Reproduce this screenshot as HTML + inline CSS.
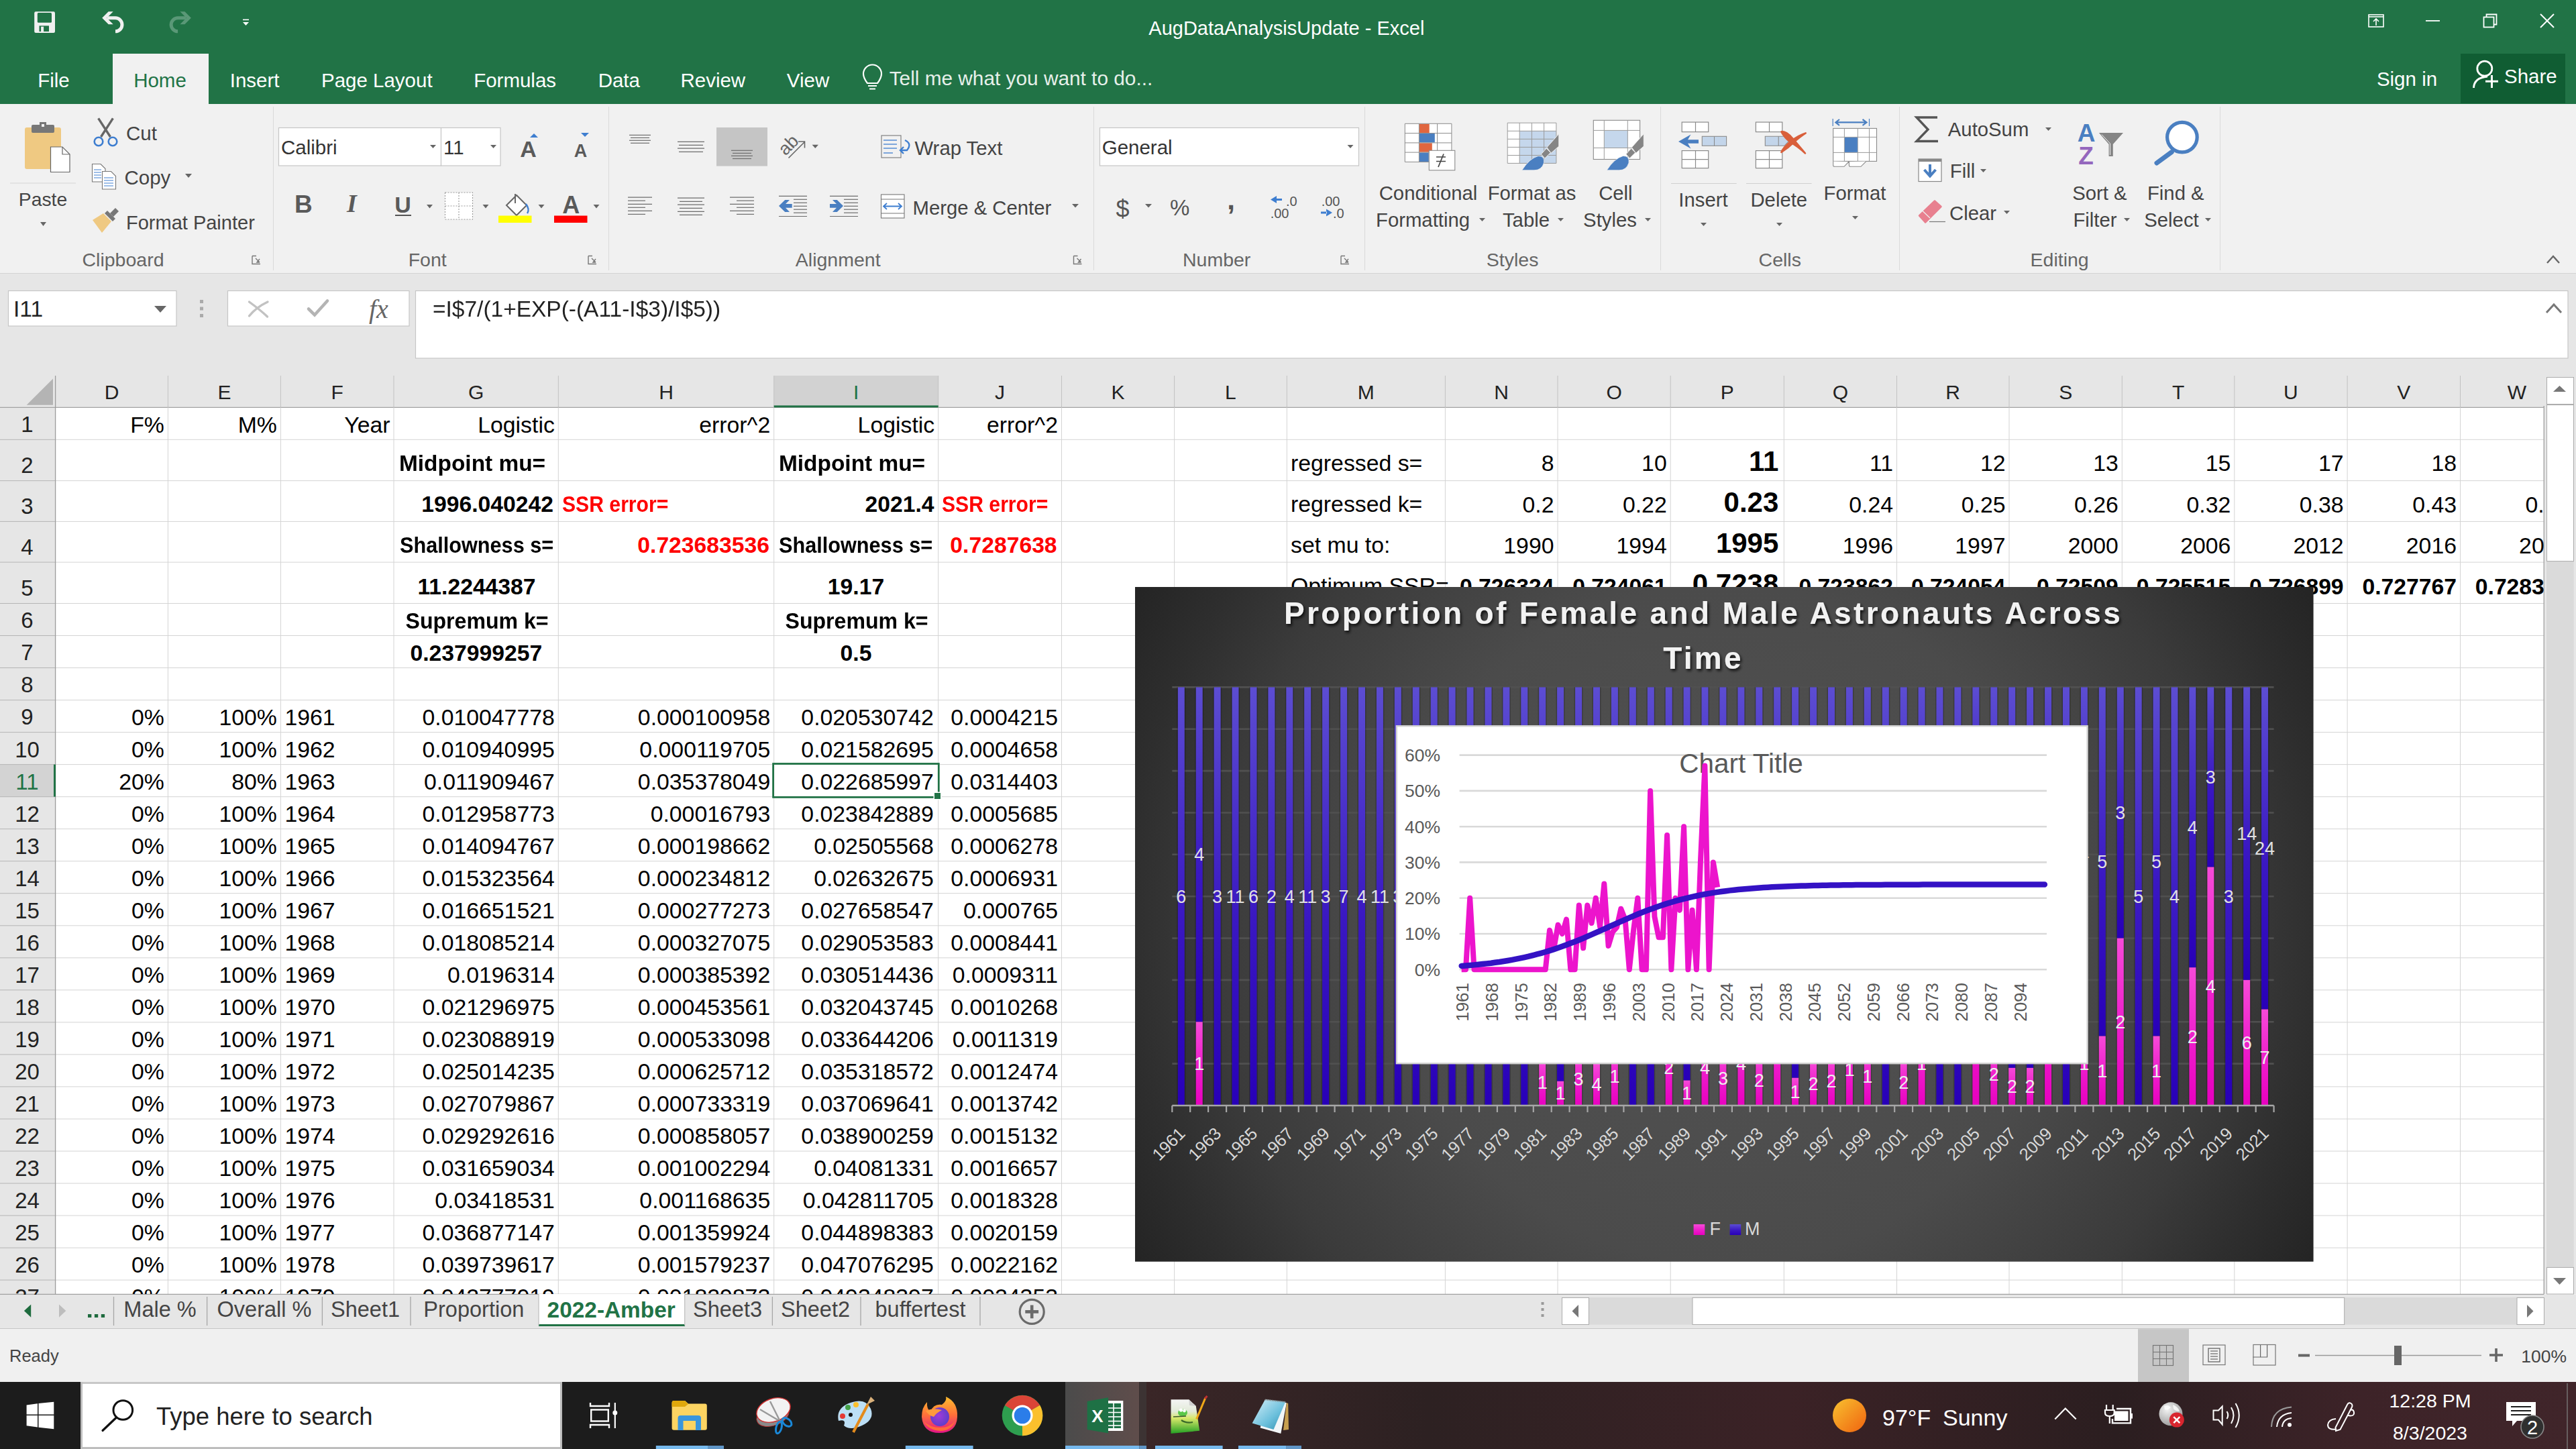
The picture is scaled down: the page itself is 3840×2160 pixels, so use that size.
<!DOCTYPE html>
<html><head><meta charset="utf-8"><title>Excel</title>
<style>
html,body{margin:0;padding:0;}
body{width:3840px;height:2160px;position:relative;overflow:hidden;background:#f1f1f1;font-family:"Liberation Sans", sans-serif;}
.t{position:absolute;white-space:nowrap;}
.r{position:absolute;}
svg{overflow:visible;}
svg text{font-family:"Liberation Sans", sans-serif;}
</style></head><body>
<div class="r" style="left:0.0px;top:0.0px;width:3840.0px;height:155.0px;background:#217346;"></div>
<div class="r" style="left:168.0px;top:80.0px;width:143.0px;height:75.0px;background:#f1f1f1;"></div>
<div class="r" style="left:3668.0px;top:80.0px;width:156.0px;height:74.0px;background:#105d33;"></div>
<svg style="position:absolute;left:0.0px;top:0.0px;" width="3840.0" height="155.0" viewBox="0 0 3840.0 155.0"><rect x="51.2" y="17.3" width="30.8" height="31.7" rx="2.2" fill="#f0f0f0"/><rect x="55.8" y="19" width="21.2" height="14.8" rx="1.5" fill="#217346"/><rect x="58.5" y="38.4" width="14.5" height="8.6" fill="#217346"/><rect x="61.1" y="39.7" width="4" height="7.3" fill="#f0f0f0"/><path d="M160 26.8 L172 26.8 A10 10 0 0 1 172 46.8" stroke="#f0f0f0" stroke-width="5" fill="none"/><path d="M152.2 26.8 L161.7 17.3 L168.7 17.3 L159.3 26.8 L168.7 36.2 L161.7 36.2 Z" fill="#f0f0f0"/><g transform="translate(437.1 0) scale(-1 1)"><path d="M160 26.8 L172 26.8 A10 10 0 0 1 172 46.8" stroke="#5a9877" stroke-width="5" fill="none"/><path d="M152.2 26.8 L161.7 17.3 L168.7 17.3 L159.3 26.8 L168.7 36.2 L161.7 36.2 Z" fill="#5a9877"/></g><rect x="362" y="28.6" width="9" height="1.6" fill="#fff"/><path d="M362 33.1 L371 33.1 L366.5 38 Z" fill="#fff"/><rect x="3531" y="22" width="22" height="18" fill="none" stroke="#fff" stroke-width="1.6"/><line x1="3531" y1="25" x2="3553" y2="25" stroke="#fff" stroke-width="1.6"/><path d="M3542 38 L3542 29 M3538 32 L3542 28 L3546 32" stroke="#fff" stroke-width="1.6" fill="none"/><line x1="3616" y1="31" x2="3637" y2="31" stroke="#fff" stroke-width="1.8"/><rect x="3702.5" y="25.5" width="15" height="15" fill="none" stroke="#fff" stroke-width="1.8"/><path d="M3706.5 25.5 L3706.5 21.5 L3721.5 21.5 L3721.5 36.5 L3717.5 36.5" fill="none" stroke="#fff" stroke-width="1.8"/><path d="M3787 21 L3807 41 M3807 21 L3787 41" stroke="#fff" stroke-width="2"/><path d="M1293 124 Q1287 116 1287 110 A13.5 13.5 0 0 1 1314 110 Q1314 116 1308 124 Z" fill="none" stroke="#fff" stroke-width="2.2"/><line x1="1294" y1="128" x2="1307" y2="128" stroke="#fff" stroke-width="2"/><line x1="1296" y1="132.5" x2="1305" y2="132.5" stroke="#fff" stroke-width="2"/><circle cx="3703.8" cy="102.2" r="11" fill="none" stroke="#fff" stroke-width="2.8"/><path d="M3687.5 131 Q3688 116 3708 114" fill="none" stroke="#fff" stroke-width="2.8"/><path d="M3714.5 112 L3714.5 131 M3705 121.2 L3724 121.2" stroke="#fff" stroke-width="3"/></svg>
<div class="t" style="top:26.0px;font-size:29.00px;line-height:32.39px;color:#fff;left:1712.3px;">AugDataAnalysisUpdate - Excel</div>
<div class="t" style="top:103.5px;font-size:29.50px;line-height:32.95px;color:#fff;left:-920.0px;width:2000px;text-align:center;">File</div>
<div class="t" style="top:103.5px;font-size:29.50px;line-height:32.95px;color:#217346;left:-761.5px;width:2000px;text-align:center;">Home</div>
<div class="t" style="top:103.5px;font-size:29.50px;line-height:32.95px;color:#fff;left:-620.4px;width:2000px;text-align:center;">Insert</div>
<div class="t" style="top:103.5px;font-size:29.50px;line-height:32.95px;color:#fff;left:-438.2px;width:2000px;text-align:center;">Page Layout</div>
<div class="t" style="top:103.5px;font-size:29.50px;line-height:32.95px;color:#fff;left:-232.4px;width:2000px;text-align:center;">Formulas</div>
<div class="t" style="top:103.5px;font-size:29.50px;line-height:32.95px;color:#fff;left:-77.2px;width:2000px;text-align:center;">Data</div>
<div class="t" style="top:103.5px;font-size:29.50px;line-height:32.95px;color:#fff;left:62.8px;width:2000px;text-align:center;">Review</div>
<div class="t" style="top:103.5px;font-size:29.50px;line-height:32.95px;color:#fff;left:204.5px;width:2000px;text-align:center;">View</div>
<div class="t" style="top:99.7px;font-size:29.80px;line-height:33.29px;color:#e6f0ea;left:1325.7px;">Tell me what you want to do...</div>
<div class="t" style="top:101.5px;font-size:29.50px;line-height:32.95px;color:#fff;left:3542.9px;">Sign in</div>
<div class="t" style="top:98.0px;font-size:29.50px;line-height:32.95px;color:#fff;left:3733.0px;">Share</div>
<div class="r" style="left:0.0px;top:155.0px;width:3840.0px;height:251.0px;background:#f1f1f1;"></div>
<div class="r" style="left:0.0px;top:407.0px;width:3840.0px;height:1.0px;background:#d4d4d4;"></div>
<div class="r" style="left:406.5px;top:159.0px;width:1.2px;height:244.0px;background:#dadada;"></div>
<div class="r" style="left:907.3px;top:159.0px;width:1.2px;height:244.0px;background:#dadada;"></div>
<div class="r" style="left:1630.3px;top:159.0px;width:1.2px;height:244.0px;background:#dadada;"></div>
<div class="r" style="left:2034.3px;top:159.0px;width:1.2px;height:244.0px;background:#dadada;"></div>
<div class="r" style="left:2475.0px;top:159.0px;width:1.2px;height:244.0px;background:#dadada;"></div>
<div class="r" style="left:2830.8px;top:159.0px;width:1.2px;height:244.0px;background:#dadada;"></div>
<div class="r" style="left:3309.3px;top:159.0px;width:1.2px;height:244.0px;background:#dadada;"></div>
<div class="t" style="top:371.7px;font-size:28.50px;line-height:31.83px;color:#666666;left:-816.5px;width:2000px;text-align:center;">Clipboard</div>
<div class="t" style="top:371.7px;font-size:28.50px;line-height:31.83px;color:#666666;left:-362.8px;width:2000px;text-align:center;">Font</div>
<div class="t" style="top:371.7px;font-size:28.50px;line-height:31.83px;color:#666666;left:249.2px;width:2000px;text-align:center;">Alignment</div>
<div class="t" style="top:371.7px;font-size:28.50px;line-height:31.83px;color:#666666;left:813.7px;width:2000px;text-align:center;">Number</div>
<div class="t" style="top:371.7px;font-size:28.50px;line-height:31.83px;color:#666666;left:1254.6px;width:2000px;text-align:center;">Styles</div>
<div class="t" style="top:371.7px;font-size:28.50px;line-height:31.83px;color:#666666;left:1653.3px;width:2000px;text-align:center;">Cells</div>
<div class="t" style="top:371.7px;font-size:28.50px;line-height:31.83px;color:#666666;left:2070.1px;width:2000px;text-align:center;">Editing</div>
<svg style="position:absolute;left:0.0px;top:0.0px;" width="3840.0" height="410.0" viewBox="0 0 3840.0 410.0"><path d="M376.0 381.5 L382.0 381.5 M376.0 381.5 L376.0 393.5 L388.0 393.5" stroke="#777" stroke-width="1.4" fill="none"/><path d="M381.0 385 L387.0 391 M387.0 391 L383.0 391 L387.0 386" stroke="#777" stroke-width="1.4" fill="none"/><path d="M877.0 381.5 L883.0 381.5 M877.0 381.5 L877.0 393.5 L889.0 393.5" stroke="#777" stroke-width="1.4" fill="none"/><path d="M882.0 385 L888.0 391 M888.0 391 L884.0 391 L888.0 386" stroke="#777" stroke-width="1.4" fill="none"/><path d="M1600.5 381.5 L1606.5 381.5 M1600.5 381.5 L1600.5 393.5 L1612.5 393.5" stroke="#777" stroke-width="1.4" fill="none"/><path d="M1605.5 385 L1611.5 391 M1611.5 391 L1607.5 391 L1611.5 386" stroke="#777" stroke-width="1.4" fill="none"/><path d="M1999.0 381.5 L2005.0 381.5 M1999.0 381.5 L1999.0 393.5 L2011.0 393.5" stroke="#777" stroke-width="1.4" fill="none"/><path d="M2004.0 385 L2010.0 391 M2010.0 391 L2006.0 391 L2010.0 386" stroke="#777" stroke-width="1.4" fill="none"/><rect x="37" y="190" width="54" height="62" rx="3" fill="#efc982"/><rect x="47" y="186" width="34" height="12" rx="2" fill="#777"/><rect x="59" y="182" width="10" height="8" fill="#777"/><rect x="62" y="185" width="4" height="4" fill="#f1f1f1"/><path d="M75.5 219 L93 219 L104 230 L104 256.5 L75.5 256.5 Z" fill="#fff" stroke="#666" stroke-width="1.2"/><path d="M93 219 L93 230 L104 230" fill="none" stroke="#666" stroke-width="1.2"/><line x1="15" y1="273" x2="113" y2="273" stroke="#d6d6d6" stroke-width="1.2"/><path d="M60 331 L69 331 L64.5 337 Z" fill="#666"/><path d="M146.6 176.4 L164.5 204 M168.4 176.4 L150.5 204" stroke="#666" stroke-width="3.4"/><circle cx="147" cy="211" r="6.3" fill="none" stroke="#3e7ed0" stroke-width="2.6"/><circle cx="168" cy="211" r="6.3" fill="none" stroke="#3e7ed0" stroke-width="2.6"/><path d="M137.5 244.5 L150 244.5 L157 251.5 L157 271 L137.5 271 Z" fill="#fff" stroke="#777" stroke-width="1.1"/><path d="M152.5 255.5 L165.5 255.5 L172.5 262.5 L172.5 282 L152.5 282 Z" fill="#fff" stroke="#777" stroke-width="1.1"/><line x1="140" y1="253" x2="151" y2="253" stroke="#3e7ed0" stroke-width="1"/><line x1="140" y1="257" x2="151" y2="257" stroke="#3e7ed0" stroke-width="1"/><line x1="140" y1="261" x2="151" y2="261" stroke="#3e7ed0" stroke-width="1"/><line x1="140" y1="265" x2="151" y2="265" stroke="#3e7ed0" stroke-width="1"/><line x1="155" y1="265" x2="169" y2="265" stroke="#3e7ed0" stroke-width="1"/><line x1="155" y1="269" x2="169" y2="269" stroke="#3e7ed0" stroke-width="1"/><line x1="155" y1="273" x2="169" y2="273" stroke="#3e7ed0" stroke-width="1"/><line x1="155" y1="277" x2="169" y2="277" stroke="#3e7ed0" stroke-width="1"/><path d="M276 259 L286 259 L281 265 Z" fill="#666"/><path d="M138 328 L154 318 L166 330 L152 347 Z" fill="#efc982"/><path d="M156 318 L168 330 L172 326 L160 314 Z" fill="#777"/><path d="M164 318 L172 310 L177 315 L169 323 Z" fill="#777"/><rect x="415.5" y="190.5" width="242" height="56.5" fill="#fff" stroke="#c6c6c6" stroke-width="1.2"/><rect x="657.5" y="190.5" width="88.5" height="56.5" fill="#fff" stroke="#c6c6c6" stroke-width="1.2"/><path d="M641 216 L650 216 L645.5 221 Z" fill="#666"/><path d="M731 216 L740 216 L735.5 221 Z" fill="#666"/><path d="M790 205 L802 205 L796 199 Z" fill="#3e7ed0"/><path d="M866 198 L878 198 L872 204 Z" fill="#3e7ed0"/><rect x="718.5" y="222" width="0" height="0"/><rect x="663.5" y="287" width="41" height="40" fill="#fff" stroke="#999" stroke-width="1.1" stroke-dasharray="2,2"/><line x1="684" y1="287" x2="684" y2="327" stroke="#999" stroke-width="1.1" stroke-dasharray="2,2"/><line x1="663.5" y1="307" x2="704.5" y2="307" stroke="#999" stroke-width="1.1" stroke-dasharray="2,2"/><path d="M636.0 305 L645.0 305 L640.5 310.5 Z" fill="#666"/><path d="M719.5 305 L728.5 305 L724.0 310.5 Z" fill="#666"/><path d="M802.5 305 L811.5 305 L807.0 310.5 Z" fill="#666"/><path d="M884.5 305 L893.5 305 L889.0 310.5 Z" fill="#666"/><path d="M755 306 L770 291 L785 306 L770 321 Z" fill="#fff" stroke="#666" stroke-width="2"/><path d="M768 289 L768 303" stroke="#666" stroke-width="2"/><path d="M784 304 Q790 312 786 318" stroke="#3e7ed0" stroke-width="2.4" fill="none"/><rect x="743" y="321.5" width="49.5" height="10.5" fill="#ffff00"/><rect x="826" y="321.5" width="49.5" height="10.5" fill="#ff0000"/><line x1="938.0" y1="201.4" x2="970.0" y2="201.4" stroke="#6d6d6d" stroke-width="1.2"/><line x1="940.0" y1="205.4" x2="968.0" y2="205.4" stroke="#6d6d6d" stroke-width="1.2"/><line x1="938.0" y1="209.3" x2="970.0" y2="209.3" stroke="#6d6d6d" stroke-width="1.2"/><line x1="940.0" y1="213.3" x2="968.0" y2="213.3" stroke="#6d6d6d" stroke-width="1.2"/><line x1="1010.0" y1="211.3" x2="1050.0" y2="211.3" stroke="#6d6d6d" stroke-width="1.2"/><line x1="1012.0" y1="216.3" x2="1048.0" y2="216.3" stroke="#6d6d6d" stroke-width="1.2"/><line x1="1010.0" y1="221.2" x2="1050.0" y2="221.2" stroke="#6d6d6d" stroke-width="1.2"/><line x1="1012.0" y1="226.4" x2="1048.0" y2="226.4" stroke="#6d6d6d" stroke-width="1.2"/><rect x="1068" y="190" width="76" height="57.6" fill="#c5c5c5"/><line x1="1090.0" y1="224.3" x2="1122.0" y2="224.3" stroke="#6d6d6d" stroke-width="1.2"/><line x1="1092.0" y1="228.4" x2="1120.0" y2="228.4" stroke="#6d6d6d" stroke-width="1.2"/><line x1="1090.0" y1="232.4" x2="1122.0" y2="232.4" stroke="#6d6d6d" stroke-width="1.2"/><line x1="1092.0" y1="236.5" x2="1120.0" y2="236.5" stroke="#6d6d6d" stroke-width="1.2"/><text x="1171" y="233" font-size="27" fill="#666" transform="rotate(-45 1171 233)">ab</text><path d="M1175.5 235.5 L1199.5 211.5 M1190 211 L1199.5 211 L1199.5 220.5" stroke="#666" stroke-width="1.6" fill="none"/><path d="M1210.6 215.8 L1220 215.8 L1215.3 221 Z" fill="#666"/><line x1="936.0" y1="294.2" x2="972.0" y2="294.2" stroke="#6d6d6d" stroke-width="1.2"/><line x1="936.0" y1="299.2" x2="962.0" y2="299.2" stroke="#6d6d6d" stroke-width="1.2"/><line x1="936.0" y1="304.3" x2="972.0" y2="304.3" stroke="#6d6d6d" stroke-width="1.2"/><line x1="936.0" y1="309.3" x2="962.0" y2="309.3" stroke="#6d6d6d" stroke-width="1.2"/><line x1="936.0" y1="314.4" x2="972.0" y2="314.4" stroke="#6d6d6d" stroke-width="1.2"/><line x1="936.0" y1="319.4" x2="962.0" y2="319.4" stroke="#6d6d6d" stroke-width="1.2"/><line x1="1010.0" y1="295.2" x2="1050.0" y2="295.2" stroke="#6d6d6d" stroke-width="1.2"/><line x1="1013.0" y1="300.3" x2="1047.0" y2="300.3" stroke="#6d6d6d" stroke-width="1.2"/><line x1="1010.0" y1="305.2" x2="1050.0" y2="305.2" stroke="#6d6d6d" stroke-width="1.2"/><line x1="1013.0" y1="310.4" x2="1047.0" y2="310.4" stroke="#6d6d6d" stroke-width="1.2"/><line x1="1010.0" y1="315.3" x2="1050.0" y2="315.3" stroke="#6d6d6d" stroke-width="1.2"/><line x1="1013.0" y1="320.3" x2="1047.0" y2="320.3" stroke="#6d6d6d" stroke-width="1.2"/><line x1="1088.0" y1="294.2" x2="1124.0" y2="294.2" stroke="#6d6d6d" stroke-width="1.2"/><line x1="1098.0" y1="299.2" x2="1124.0" y2="299.2" stroke="#6d6d6d" stroke-width="1.2"/><line x1="1088.0" y1="304.3" x2="1124.0" y2="304.3" stroke="#6d6d6d" stroke-width="1.2"/><line x1="1098.0" y1="309.3" x2="1124.0" y2="309.3" stroke="#6d6d6d" stroke-width="1.2"/><line x1="1088.0" y1="314.4" x2="1124.0" y2="314.4" stroke="#6d6d6d" stroke-width="1.2"/><line x1="1098.0" y1="319.4" x2="1124.0" y2="319.4" stroke="#6d6d6d" stroke-width="1.2"/><line x1="1161.0" y1="292.4" x2="1203.0" y2="292.4" stroke="#6d6d6d" stroke-width="1.2"/><line x1="1183.0" y1="297.3" x2="1203.0" y2="297.3" stroke="#6d6d6d" stroke-width="1.2"/><line x1="1183.0" y1="302.3" x2="1203.0" y2="302.3" stroke="#6d6d6d" stroke-width="1.2"/><line x1="1183.0" y1="307.3" x2="1203.0" y2="307.3" stroke="#6d6d6d" stroke-width="1.2"/><line x1="1183.0" y1="312.2" x2="1203.0" y2="312.2" stroke="#6d6d6d" stroke-width="1.2"/><line x1="1183.0" y1="317.2" x2="1203.0" y2="317.2" stroke="#6d6d6d" stroke-width="1.2"/><line x1="1161.0" y1="322.5" x2="1203.0" y2="322.5" stroke="#6d6d6d" stroke-width="1.2"/><path d="M1161 307 L1170.2 298 L1177 298 L1171 303.9 L1180.7 303.9 L1180.7 309.8 L1171 309.8 L1177 316 L1170.2 316 Z" fill="#4a7fc1"/><line x1="1237.0" y1="292.4" x2="1279.0" y2="292.4" stroke="#6d6d6d" stroke-width="1.2"/><line x1="1258.0" y1="297.3" x2="1279.0" y2="297.3" stroke="#6d6d6d" stroke-width="1.2"/><line x1="1258.0" y1="302.3" x2="1279.0" y2="302.3" stroke="#6d6d6d" stroke-width="1.2"/><line x1="1258.0" y1="307.3" x2="1279.0" y2="307.3" stroke="#6d6d6d" stroke-width="1.2"/><line x1="1258.0" y1="312.2" x2="1279.0" y2="312.2" stroke="#6d6d6d" stroke-width="1.2"/><line x1="1258.0" y1="317.2" x2="1279.0" y2="317.2" stroke="#6d6d6d" stroke-width="1.2"/><line x1="1237.0" y1="322.5" x2="1279.0" y2="322.5" stroke="#6d6d6d" stroke-width="1.2"/><path d="M1257 307 L1247.8 298 L1241 298 L1247 303.9 L1237 303.9 L1237 309.8 L1247 309.8 L1241 316 L1247.8 316 Z" fill="#4a7fc1"/><rect x="1314" y="202" width="29" height="33" fill="none" stroke="#777" stroke-width="1.1"/><line x1="1317.0" y1="209.0" x2="1337.0" y2="209.0" stroke="#3e7ed0" stroke-width="1.3"/><line x1="1317.0" y1="215.0" x2="1337.0" y2="215.0" stroke="#3e7ed0" stroke-width="1.3"/><line x1="1317.0" y1="221.0" x2="1337.0" y2="221.0" stroke="#3e7ed0" stroke-width="1.3"/><line x1="1317.0" y1="228.0" x2="1331.0" y2="228.0" stroke="#3e7ed0" stroke-width="1.3"/><path d="M1349 209 Q1360 214 1352 224 L1343 224 M1347 219 L1342 224 L1347 229" stroke="#3e7ed0" stroke-width="2.4" fill="none"/><rect x="1313.5" y="290" width="34.5" height="35" fill="#fff" stroke="#777" stroke-width="1.1"/><line x1="1313.5" y1="297" x2="1348" y2="297" stroke="#777" stroke-width="1"/><line x1="1313.5" y1="318" x2="1348" y2="318" stroke="#777" stroke-width="1"/><path d="M1318 307.5 L1343 307.5 M1322 303 L1317 307.5 L1322 312 M1339 303 L1344 307.5 L1339 312" stroke="#3e7ed0" stroke-width="1.8" fill="none"/><path d="M1598 304 L1608 304 L1603 309.5 Z" fill="#666"/><rect x="1639.5" y="190.5" width="386" height="56.5" fill="#fff" stroke="#c6c6c6" stroke-width="1.2"/><path d="M2008.5 216 L2017.5 216 L2013 221 Z" fill="#666"/><path d="M1707 304 L1717 304 L1712 309.5 Z" fill="#666"/></svg>
<div class="t" style="top:182.8px;font-size:29.50px;line-height:32.95px;color:#444444;left:188.0px;">Cut</div>
<div class="t" style="top:248.8px;font-size:29.50px;line-height:32.95px;color:#444444;left:185.5px;">Copy</div>
<div class="t" style="top:315.8px;font-size:29.00px;line-height:32.39px;color:#444444;left:188.0px;">Format Painter</div>
<div class="t" style="top:282.4px;font-size:28.30px;line-height:31.61px;color:#444444;left:-936.0px;width:2000px;text-align:center;">Paste</div>
<div class="t" style="top:204.3px;font-size:29.50px;line-height:32.95px;color:#333;left:419.0px;">Calibri</div>
<div class="t" style="top:204.3px;font-size:29.50px;line-height:32.95px;color:#333;left:661.0px;">11</div>
<div class="t" style="top:203.2px;font-size:34.00px;line-height:37.98px;color:#5a5a5a;font-weight:bold;left:-212.5px;width:2000px;text-align:center;">A</div>
<div class="t" style="top:209.6px;font-size:27.00px;line-height:30.16px;color:#5a5a5a;font-weight:bold;left:-134.5px;width:2000px;text-align:center;">A</div>
<div class="t" style="top:283.5px;font-size:37.00px;line-height:41.33px;color:#5a5a5a;font-weight:bold;left:-547.7px;width:2000px;text-align:center;">B</div>
<div class="t" style="left:517px;top:283px;font-size:38px;line-height:40px;color:#5a5a5a;font-weight:bold;font-family:'Liberation Serif',serif;font-style:italic;">I</div>
<div class="t" style="top:286.2px;font-size:34.00px;line-height:37.98px;color:#5a5a5a;font-weight:bold;left:-399.5px;width:2000px;text-align:center;">U</div>
<div class="r" style="left:589.0px;top:319.5px;width:23.5px;height:2.0px;background:#555;"></div>
<div class="t" style="top:286.4px;font-size:36.00px;line-height:40.21px;color:#5a5a5a;font-weight:bold;left:-148.8px;width:2000px;text-align:center;">A</div>
<div class="t" style="top:204.5px;font-size:29.30px;line-height:32.73px;color:#444444;left:1363.5px;">Wrap Text</div>
<div class="t" style="top:294.0px;font-size:29.30px;line-height:32.73px;color:#444444;left:1360.5px;">Merge &amp; Center</div>
<div class="t" style="top:204.3px;font-size:29.50px;line-height:32.95px;color:#333;left:1642.7px;">General</div>
<div class="t" style="top:292.4px;font-size:36.00px;line-height:40.21px;color:#555;left:673.5px;width:2000px;text-align:center;">$</div>
<div class="t" style="top:292.1px;font-size:33.00px;line-height:36.86px;color:#555;left:758.7px;width:2000px;text-align:center;">%</div>
<div class="t" style="top:275.0px;font-size:42.00px;line-height:46.91px;color:#555;font-weight:bold;left:835.0px;width:2000px;text-align:center;">,</div>
<div class="t" style="top:288.9px;font-size:20.00px;line-height:22.34px;color:#555;left:1911.0px;margin-left:6px;">.0</div>
<div class="t" style="top:307.4px;font-size:20.00px;line-height:22.34px;color:#555;left:1893.7px;">.00</div>
<div class="t" style="top:288.9px;font-size:20.00px;line-height:22.34px;color:#555;left:1969.7px;">.00</div>
<div class="t" style="top:307.4px;font-size:20.00px;line-height:22.34px;color:#555;left:1987.0px;">.0</div>
<svg style="position:absolute;left:0.0px;top:0.0px;" width="3840.0" height="410.0" viewBox="0 0 3840.0 410.0"><path d="M1894 297.5 L1903 292 L1903 303 Z M1902 296 L1911 296 L1911 299 L1902 299 Z" fill="#3e7ed0"/><path d="M1986 317 L1977 311.5 L1977 322.5 Z M1969 315.5 L1978 315.5 L1978 318.5 L1969 318.5 Z" fill="#3e7ed0"/></svg>
<div class="t" style="top:271.6px;font-size:29.30px;line-height:32.73px;color:#444444;left:1129.0px;width:2000px;text-align:center;">Conditional</div>
<div class="t" style="top:311.5px;font-size:29.30px;line-height:32.73px;color:#444444;left:1121.0px;width:2000px;text-align:center;">Formatting</div>
<div class="t" style="top:271.6px;font-size:29.30px;line-height:32.73px;color:#444444;left:1283.6px;width:2000px;text-align:center;">Format as</div>
<div class="t" style="top:311.5px;font-size:29.30px;line-height:32.73px;color:#444444;left:1275.0px;width:2000px;text-align:center;">Table</div>
<div class="t" style="top:271.6px;font-size:29.30px;line-height:32.73px;color:#444444;left:1408.4px;width:2000px;text-align:center;">Cell</div>
<div class="t" style="top:311.5px;font-size:29.30px;line-height:32.73px;color:#444444;left:1400.0px;width:2000px;text-align:center;">Styles</div>
<div class="t" style="top:281.5px;font-size:29.30px;line-height:32.73px;color:#444444;left:1539.0px;width:2000px;text-align:center;">Insert</div>
<div class="t" style="top:281.5px;font-size:29.30px;line-height:32.73px;color:#444444;left:1651.8px;width:2000px;text-align:center;">Delete</div>
<div class="t" style="top:271.5px;font-size:29.30px;line-height:32.73px;color:#444444;left:1765.0px;width:2000px;text-align:center;">Format</div>
<div class="t" style="top:177.2px;font-size:29.30px;line-height:32.73px;color:#444444;left:2903.8px;">AutoSum</div>
<div class="t" style="top:239.3px;font-size:29.30px;line-height:32.73px;color:#444444;left:2906.8px;">Fill</div>
<div class="t" style="top:301.5px;font-size:29.30px;line-height:32.73px;color:#444444;left:2906.0px;">Clear</div>
<div class="t" style="top:271.5px;font-size:29.30px;line-height:32.73px;color:#444444;left:2129.9px;width:2000px;text-align:center;">Sort &amp;</div>
<div class="t" style="top:311.5px;font-size:29.30px;line-height:32.73px;color:#444444;left:2123.0px;width:2000px;text-align:center;">Filter</div>
<div class="t" style="top:271.5px;font-size:29.30px;line-height:32.73px;color:#444444;left:2243.3px;width:2000px;text-align:center;">Find &amp;</div>
<div class="t" style="top:311.5px;font-size:29.30px;line-height:32.73px;color:#444444;left:2237.0px;width:2000px;text-align:center;">Select</div>
<svg style="position:absolute;left:0.0px;top:0.0px;" width="3840.0" height="410.0" viewBox="0 0 3840.0 410.0"><path d="M2205.0 325.0 L2214.0 325.0 L2209.5 330.0 Z" fill="#666"/><path d="M2322.0 325.0 L2331.0 325.0 L2326.5 330.0 Z" fill="#666"/><path d="M2452.0 325.0 L2461.0 325.0 L2456.5 330.0 Z" fill="#666"/><path d="M2535.0 332.0 L2544.0 332.0 L2539.5 337.0 Z" fill="#666"/><path d="M2648.0 332.0 L2657.0 332.0 L2652.5 337.0 Z" fill="#666"/><path d="M2761.0 322.0 L2770.0 322.0 L2765.5 327.0 Z" fill="#666"/><path d="M3049.0 190.0 L3058.0 190.0 L3053.5 195.0 Z" fill="#666"/><path d="M2952.0 252.0 L2961.0 252.0 L2956.5 257.0 Z" fill="#666"/><path d="M2987.0 314.0 L2996.0 314.0 L2991.5 319.0 Z" fill="#666"/><path d="M3166.0 325.0 L3175.0 325.0 L3170.5 330.0 Z" fill="#666"/><path d="M3287.0 325.0 L3296.0 325.0 L3291.5 330.0 Z" fill="#666"/><rect x="2094.3" y="184.3" width="69.6" height="57.1" fill="#fff"/><rect x="2115.8" y="184.8" width="14.9" height="13.4" fill="#e0663f"/><rect x="2115.8" y="199" width="23" height="13.4" fill="#4a7fc1"/><rect x="2115.8" y="213.3" width="19" height="13.4" fill="#e0663f"/><rect x="2115.8" y="227.5" width="14" height="13.5" fill="#4a7fc1"/><line x1="2094.3" y1="184.3" x2="2094.3" y2="241.4" stroke="#8a8a8a" stroke-width="1"/><line x1="2115.4" y1="184.3" x2="2115.4" y2="241.4" stroke="#8a8a8a" stroke-width="1"/><line x1="2142.6" y1="184.3" x2="2142.6" y2="241.4" stroke="#8a8a8a" stroke-width="1"/><line x1="2163.9" y1="184.3" x2="2163.9" y2="241.4" stroke="#8a8a8a" stroke-width="1"/><line x1="2094.3" y1="184.3" x2="2163.9" y2="184.3" stroke="#8a8a8a" stroke-width="1"/><line x1="2094.3" y1="198.6" x2="2163.9" y2="198.6" stroke="#8a8a8a" stroke-width="1"/><line x1="2094.3" y1="212.9" x2="2163.9" y2="212.9" stroke="#8a8a8a" stroke-width="1"/><line x1="2094.3" y1="227.1" x2="2163.9" y2="227.1" stroke="#8a8a8a" stroke-width="1"/><line x1="2094.3" y1="241.4" x2="2163.9" y2="241.4" stroke="#8a8a8a" stroke-width="1"/><rect x="2130.3" y="224.3" width="38.5" height="29.5" fill="#fff" stroke="#8a8a8a" stroke-width="1.1"/><path d="M2141 234 L2155 234 M2141 240.5 L2155 240.5 M2152 229.5 L2144 249" stroke="#444" stroke-width="1.7" fill="none"/><rect x="2247.2" y="183.2" width="72.7" height="60.2" fill="#fff"/><rect x="2265.2" y="195.3" width="54.7" height="48.1" fill="#c5d7ec"/><line x1="2247.2" y1="183.2" x2="2247.2" y2="243.4" stroke="#9a9a9a" stroke-width="1"/><line x1="2265.2" y1="183.2" x2="2265.2" y2="243.4" stroke="#9a9a9a" stroke-width="1"/><line x1="2283.4" y1="183.2" x2="2283.4" y2="243.4" stroke="#9a9a9a" stroke-width="1"/><line x1="2301.6" y1="183.2" x2="2301.6" y2="243.4" stroke="#9a9a9a" stroke-width="1"/><line x1="2319.9" y1="183.2" x2="2319.9" y2="243.4" stroke="#9a9a9a" stroke-width="1"/><line x1="2247.2" y1="183.2" x2="2319.9" y2="183.2" stroke="#9a9a9a" stroke-width="1"/><line x1="2247.2" y1="195.3" x2="2319.9" y2="195.3" stroke="#9a9a9a" stroke-width="1"/><line x1="2247.2" y1="207.3" x2="2319.9" y2="207.3" stroke="#9a9a9a" stroke-width="1"/><line x1="2247.2" y1="219.4" x2="2319.9" y2="219.4" stroke="#9a9a9a" stroke-width="1"/><line x1="2247.2" y1="231.5" x2="2319.9" y2="231.5" stroke="#9a9a9a" stroke-width="1"/><line x1="2247.2" y1="243.4" x2="2319.9" y2="243.4" stroke="#9a9a9a" stroke-width="1"/><path d="M2305.9 219.7 L2323.8 199.5 L2323.8 218.1 L2312.1 228.2 Z" fill="#858585" stroke="#f1f1f1" stroke-width="1"/><path d="M2297.4 229.8 L2305.2 221.2 L2311.4 227.5 L2302.8 236 Z" fill="#858585" stroke="#f1f1f1" stroke-width="1"/><path d="M2268.7 253.8 Q2280.0 236 2293.0 232.5 Q2303.0 232 2301.5 243 Q2298.0 253.8 2287.0 253.8 Z" fill="#4a7fc1" stroke="#f1f1f1" stroke-width="0.8"/><rect x="2375.3" y="179.3" width="69.3" height="58.2" fill="#fff" stroke="#8a8a8a" stroke-width="1.1"/><rect x="2391.3" y="194.4" width="35" height="26.1" fill="#c5d7ec"/><line x1="2375.3" y1="194.4" x2="2444.6" y2="194.4" stroke="#9a9a9a"/><line x1="2375.3" y1="220.5" x2="2444.6" y2="220.5" stroke="#9a9a9a"/><line x1="2391.3" y1="179.3" x2="2391.3" y2="237.5" stroke="#9a9a9a"/><line x1="2426.3" y1="179.3" x2="2426.3" y2="237.5" stroke="#9a9a9a"/><path d="M2432.4 219.7 L2450.3 199.5 L2450.3 218.1 L2438.6 228.2 Z" fill="#858585" stroke="#f1f1f1" stroke-width="1"/><path d="M2423.9 229.8 L2431.7 221.2 L2437.9 227.5 L2429.3 236 Z" fill="#858585" stroke="#f1f1f1" stroke-width="1"/><path d="M2395.2 253.8 Q2406.5 236 2419.5 232.5 Q2429.5 232 2428.0 243 Q2424.5 253.8 2413.5 253.8 Z" fill="#4a7fc1" stroke="#f1f1f1" stroke-width="0.8"/><rect x="2507.2" y="182.1" width="39.5" height="14.5" fill="#fff" stroke="#8a8a8a" stroke-width="1.2"/><line x1="2527.5" y1="182.1" x2="2527.5" y2="196.6" stroke="#8a8a8a" stroke-width="1.2"/><rect x="2507.2" y="224.6" width="39.5" height="26" fill="#fff" stroke="#8a8a8a" stroke-width="1.2"/><line x1="2527.5" y1="224.6" x2="2527.5" y2="250.6" stroke="#8a8a8a" stroke-width="1.2"/><line x1="2507.2" y1="237.6" x2="2546.7" y2="237.6" stroke="#8a8a8a" stroke-width="1.2"/><rect x="2537.3" y="203.3" width="36.3" height="14" fill="#c3d5ea" stroke="#8a8a8a" stroke-width="1.1"/><line x1="2555.5" y1="203.3" x2="2555.5" y2="217.3" stroke="#8a8a8a" stroke-width="1.1"/><path d="M2502 211 L2520.5 200.5 L2516 208.2 L2532 208.2 L2532 213.8 L2516 213.8 L2520.5 221.5 Z" fill="#4a7fc1"/><line x1="2491" y1="273.5" x2="2588.7" y2="273.5" stroke="#d0d0d0" stroke-width="1.2"/><rect x="2617.4" y="182.1" width="39.4" height="14.5" fill="#fff" stroke="#8a8a8a" stroke-width="1.2"/><line x1="2637.5" y1="182.1" x2="2637.5" y2="196.6" stroke="#8a8a8a" stroke-width="1.2"/><rect x="2617.4" y="224.6" width="39.4" height="26" fill="#fff" stroke="#8a8a8a" stroke-width="1.2"/><line x1="2637.5" y1="224.6" x2="2637.5" y2="250.6" stroke="#8a8a8a" stroke-width="1.2"/><line x1="2617.4" y1="237.6" x2="2656.8" y2="237.6" stroke="#8a8a8a" stroke-width="1.2"/><path d="M2631.3 203.3 L2660 203.3 L2666.6 210.3 L2660 217.3 L2631.3 217.3 Z" fill="#c3d5ea" stroke="#8a8a8a" stroke-width="1.1"/><line x1="2651.2" y1="203.3" x2="2651.2" y2="217.3" stroke="#8a8a8a" stroke-width="1.1"/><path d="M2655.4 196.3 Q2662 195 2672 206 Q2684 220 2691 228.5 Q2680 218 2669 212 Q2660 205 2655.4 196.3 Z" fill="#d95f3b" stroke="#d95f3b" stroke-width="2.6" stroke-linejoin="round"/><path d="M2691.7 198.4 Q2680 202 2669 211 Q2658 220 2655.4 227 Q2666 220 2673 213 Q2683 204 2691.7 198.4 Z" fill="#d95f3b" stroke="#d95f3b" stroke-width="2.6" stroke-linejoin="round"/><line x1="2603" y1="273.5" x2="2700.6" y2="273.5" stroke="#d0d0d0" stroke-width="1.2"/><rect x="2732.7" y="191.4" width="64.8" height="49" fill="#fff" stroke="#8a8a8a" stroke-width="1.1"/><line x1="2749.4" y1="191.4" x2="2749.4" y2="240.4" stroke="#9a9a9a" stroke-width="1"/><line x1="2769.3" y1="191.4" x2="2769.3" y2="240.4" stroke="#9a9a9a" stroke-width="1"/><line x1="2786.5" y1="191.4" x2="2786.5" y2="240.4" stroke="#9a9a9a" stroke-width="1"/><line x1="2732.7" y1="204.4" x2="2797.5" y2="204.4" stroke="#9a9a9a" stroke-width="1"/><line x1="2732.7" y1="227.4" x2="2797.5" y2="227.4" stroke="#9a9a9a" stroke-width="1"/><rect x="2749.9" y="204.9" width="19" height="22" fill="#4a7fc1"/><path d="M2732.7 240.4 L2732.7 246.5 Q2732.7 248.3 2735 248.3 L2749 248.3 L2756 241 M2756.4 241 L2756.4 246.5 Q2756.4 248.3 2758.5 248.3 L2774 248.3 L2782 240.4" fill="#fff" stroke="#8a8a8a" stroke-width="1.1"/><path d="M2737 182.4 L2782 182.4 M2742 178 L2736.4 182.4 L2742 187 M2776.5 178 L2782.5 182.4 L2776.5 187" stroke="#4a7fc1" stroke-width="2.2" fill="none"/><path d="M2732.2 177 L2732.2 188 M2786.5 177 L2786.5 188" stroke="#4a7fc1" stroke-width="1.2"/><path d="M2888 175 L2857 175 L2874 193 L2857 210.5 L2889 210.5" stroke="#555" stroke-width="3.4" fill="none"/><rect x="2860" y="237" width="34" height="33.5" fill="#fff" stroke="#888" stroke-width="1.2"/><rect x="2860" y="237" width="34" height="4" fill="#888"/><path d="M2877 245 L2877 261 M2868.5 253 L2877 262.5 L2885.5 253" stroke="#4a7fc1" stroke-width="4" fill="none"/><path d="M2884 299.5 L2893.5 308 L2870 331.5 L2861 321.5 Z" fill="#e8808f" stroke="#e8808f" stroke-width="2.5" stroke-linejoin="round"/><line x1="2866" y1="314.5" x2="2877" y2="325" stroke="#f1f1f1" stroke-width="1.2"/><line x1="2876" y1="330.5" x2="2900" y2="330.5" stroke="#777" stroke-width="1.2"/><text x="3110" y="211" font-size="37" font-weight="bold" fill="#4a7fc1" text-anchor="middle">A</text><text x="3109.6" y="244.5" font-size="37" font-weight="bold" fill="#9467bd" text-anchor="middle">Z</text><path d="M3128.9 198 L3165 198 L3149.8 215 L3149.8 232.9 L3143.6 232.9 L3143.6 215 Z" fill="#858585"/><path d="M3133 200.5 L3145.5 214 L3145.5 231" fill="none" stroke="#f1f1f1" stroke-width="1"/><circle cx="3252.9" cy="204.6" r="22.3" fill="#fff" stroke="#4a7fc1" stroke-width="5.2"/><line x1="3237.3" y1="226.6" x2="3215" y2="243" stroke="#4a7fc1" stroke-width="7" stroke-linecap="round"/><path d="M3797 392 L3806 382 L3815 392" stroke="#666" stroke-width="2.4" fill="none"/></svg>
<div class="r" style="left:0.0px;top:408.0px;width:3840.0px;height:152.0px;background:#e6e6e6;"></div>
<svg style="position:absolute;left:0.0px;top:0.0px;" width="3840.0" height="560.0" viewBox="0 0 3840.0 560.0"><rect x="12.5" y="433.5" width="250.5" height="52.5" fill="#fff" stroke="#c6c6c6" stroke-width="1.2"/><path d="M230 456 L248 456 L239 466 Z" fill="#666"/><rect x="298" y="447" width="5" height="5" fill="#aaa"/><rect x="298" y="457.5" width="5" height="5" fill="#aaa"/><rect x="298" y="468" width="5" height="5" fill="#aaa"/><rect x="339.5" y="433.5" width="270.5" height="52.5" fill="#fff" stroke="#c6c6c6" stroke-width="1.2"/><path d="M371.5 450 Q388 462 398.5 472 M399 450 Q382 458 371.5 471" stroke="#c2c2c2" stroke-width="3.4" stroke-linecap="round" fill="none"/><path d="M460 460.5 L469 469.5 L488 448.5" stroke="#b4b4b4" stroke-width="4.6" stroke-linecap="round" fill="none"/><rect x="619.5" y="433.5" width="3208.5" height="100.5" fill="#fff" stroke="#c6c6c6" stroke-width="1.2"/><path d="M3796 466 L3807 454 L3818 466" stroke="#777" stroke-width="3" fill="none"/></svg>
<div class="t" style="left:550px;top:438px;font-size:40px;line-height:46px;color:#666;font-family:'Liberation Serif',serif;font-style:italic;">fx</div>
<div class="t" style="top:441.7px;font-size:33.50px;line-height:37.42px;color:#222;left:20.0px;">I11</div>
<div class="t" style="top:442.6px;font-size:32.50px;line-height:36.30px;color:#222;left:645.0px;transform:scaleX(1.030);transform-origin:0 0;">=I$7/(1+EXP(-(A11-I$3)/I$5))</div>
<div class="r" style="left:0.0px;top:560.0px;width:3840.0px;height:1369.3px;background:#e6e6e6;"></div>
<div class="r" style="left:83.0px;top:607.3px;width:3709.2px;height:1322.0px;background:#ffffff;"></div>
<div class="r" style="left:1153.7px;top:560.0px;width:245.0px;height:47.3px;background:#d2d2d2;"></div>
<div class="r" style="left:0.0px;top:1139.6px;width:82.5px;height:48.0px;background:#d3d3d3;"></div>
<svg style="position:absolute;left:0.0px;top:0.0px;" width="3840.0" height="2160.0" viewBox="0 0 3840.0 2160.0"><line x1="250.4" y1="560.0" x2="250.4" y2="607.3" stroke="#c2c2c2" stroke-width="1"/><line x1="418.4" y1="560.0" x2="418.4" y2="607.3" stroke="#c2c2c2" stroke-width="1"/><line x1="587.0" y1="560.0" x2="587.0" y2="607.3" stroke="#c2c2c2" stroke-width="1"/><line x1="832.3" y1="560.0" x2="832.3" y2="607.3" stroke="#c2c2c2" stroke-width="1"/><line x1="1153.7" y1="560.0" x2="1153.7" y2="607.3" stroke="#c2c2c2" stroke-width="1"/><line x1="1398.7" y1="560.0" x2="1398.7" y2="607.3" stroke="#c2c2c2" stroke-width="1"/><line x1="1582.5" y1="560.0" x2="1582.5" y2="607.3" stroke="#c2c2c2" stroke-width="1"/><line x1="1750.6" y1="560.0" x2="1750.6" y2="607.3" stroke="#c2c2c2" stroke-width="1"/><line x1="1918.3" y1="560.0" x2="1918.3" y2="607.3" stroke="#c2c2c2" stroke-width="1"/><line x1="2154.4" y1="560.0" x2="2154.4" y2="607.3" stroke="#c2c2c2" stroke-width="1"/><line x1="2322.0" y1="560.0" x2="2322.0" y2="607.3" stroke="#c2c2c2" stroke-width="1"/><line x1="2490.2" y1="560.0" x2="2490.2" y2="607.3" stroke="#c2c2c2" stroke-width="1"/><line x1="2659.3" y1="560.0" x2="2659.3" y2="607.3" stroke="#c2c2c2" stroke-width="1"/><line x1="2827.5" y1="560.0" x2="2827.5" y2="607.3" stroke="#c2c2c2" stroke-width="1"/><line x1="2995.0" y1="560.0" x2="2995.0" y2="607.3" stroke="#c2c2c2" stroke-width="1"/><line x1="3163.3" y1="560.0" x2="3163.3" y2="607.3" stroke="#c2c2c2" stroke-width="1"/><line x1="3330.8" y1="560.0" x2="3330.8" y2="607.3" stroke="#c2c2c2" stroke-width="1"/><line x1="3499.1" y1="560.0" x2="3499.1" y2="607.3" stroke="#c2c2c2" stroke-width="1"/><line x1="3667.5" y1="560.0" x2="3667.5" y2="607.3" stroke="#c2c2c2" stroke-width="1"/><line x1="0" y1="607.3" x2="3792.2" y2="607.3" stroke="#a3a3a3" stroke-width="1.3"/><line x1="0" y1="655.3" x2="82.5" y2="655.3" stroke="#b5b5b5" stroke-width="1"/><line x1="0" y1="716.6" x2="82.5" y2="716.6" stroke="#b5b5b5" stroke-width="1"/><line x1="0" y1="777.4" x2="82.5" y2="777.4" stroke="#b5b5b5" stroke-width="1"/><line x1="0" y1="838.1" x2="82.5" y2="838.1" stroke="#b5b5b5" stroke-width="1"/><line x1="0" y1="899.5" x2="82.5" y2="899.5" stroke="#b5b5b5" stroke-width="1"/><line x1="0" y1="947.5" x2="82.5" y2="947.5" stroke="#b5b5b5" stroke-width="1"/><line x1="0" y1="995.5" x2="82.5" y2="995.5" stroke="#b5b5b5" stroke-width="1"/><line x1="0" y1="1043.6" x2="82.5" y2="1043.6" stroke="#b5b5b5" stroke-width="1"/><line x1="0" y1="1091.6" x2="82.5" y2="1091.6" stroke="#b5b5b5" stroke-width="1"/><line x1="0" y1="1139.6" x2="82.5" y2="1139.6" stroke="#b5b5b5" stroke-width="1"/><line x1="0" y1="1187.7" x2="82.5" y2="1187.7" stroke="#b5b5b5" stroke-width="1"/><line x1="0" y1="1235.7" x2="82.5" y2="1235.7" stroke="#b5b5b5" stroke-width="1"/><line x1="0" y1="1283.7" x2="82.5" y2="1283.7" stroke="#b5b5b5" stroke-width="1"/><line x1="0" y1="1331.7" x2="82.5" y2="1331.7" stroke="#b5b5b5" stroke-width="1"/><line x1="0" y1="1379.8" x2="82.5" y2="1379.8" stroke="#b5b5b5" stroke-width="1"/><line x1="0" y1="1427.8" x2="82.5" y2="1427.8" stroke="#b5b5b5" stroke-width="1"/><line x1="0" y1="1475.8" x2="82.5" y2="1475.8" stroke="#b5b5b5" stroke-width="1"/><line x1="0" y1="1523.9" x2="82.5" y2="1523.9" stroke="#b5b5b5" stroke-width="1"/><line x1="0" y1="1571.9" x2="82.5" y2="1571.9" stroke="#b5b5b5" stroke-width="1"/><line x1="0" y1="1619.9" x2="82.5" y2="1619.9" stroke="#b5b5b5" stroke-width="1"/><line x1="0" y1="1668.0" x2="82.5" y2="1668.0" stroke="#b5b5b5" stroke-width="1"/><line x1="0" y1="1716.0" x2="82.5" y2="1716.0" stroke="#b5b5b5" stroke-width="1"/><line x1="0" y1="1764.0" x2="82.5" y2="1764.0" stroke="#b5b5b5" stroke-width="1"/><line x1="0" y1="1812.0" x2="82.5" y2="1812.0" stroke="#b5b5b5" stroke-width="1"/><line x1="0" y1="1860.1" x2="82.5" y2="1860.1" stroke="#b5b5b5" stroke-width="1"/><line x1="0" y1="1908.1" x2="82.5" y2="1908.1" stroke="#b5b5b5" stroke-width="1"/><line x1="0" y1="1956.1" x2="82.5" y2="1956.1" stroke="#b5b5b5" stroke-width="1"/><line x1="83" y1="655.3" x2="3792.2" y2="655.3" stroke="#d4d4d4" stroke-width="1"/><line x1="83" y1="716.6" x2="3792.2" y2="716.6" stroke="#d4d4d4" stroke-width="1"/><line x1="83" y1="777.4" x2="3792.2" y2="777.4" stroke="#d4d4d4" stroke-width="1"/><line x1="83" y1="838.1" x2="3792.2" y2="838.1" stroke="#d4d4d4" stroke-width="1"/><line x1="83" y1="899.5" x2="3792.2" y2="899.5" stroke="#d4d4d4" stroke-width="1"/><line x1="83" y1="947.5" x2="3792.2" y2="947.5" stroke="#d4d4d4" stroke-width="1"/><line x1="83" y1="995.5" x2="3792.2" y2="995.5" stroke="#d4d4d4" stroke-width="1"/><line x1="83" y1="1043.6" x2="3792.2" y2="1043.6" stroke="#d4d4d4" stroke-width="1"/><line x1="83" y1="1091.6" x2="3792.2" y2="1091.6" stroke="#d4d4d4" stroke-width="1"/><line x1="83" y1="1139.6" x2="3792.2" y2="1139.6" stroke="#d4d4d4" stroke-width="1"/><line x1="83" y1="1187.7" x2="3792.2" y2="1187.7" stroke="#d4d4d4" stroke-width="1"/><line x1="83" y1="1235.7" x2="3792.2" y2="1235.7" stroke="#d4d4d4" stroke-width="1"/><line x1="83" y1="1283.7" x2="3792.2" y2="1283.7" stroke="#d4d4d4" stroke-width="1"/><line x1="83" y1="1331.7" x2="3792.2" y2="1331.7" stroke="#d4d4d4" stroke-width="1"/><line x1="83" y1="1379.8" x2="3792.2" y2="1379.8" stroke="#d4d4d4" stroke-width="1"/><line x1="83" y1="1427.8" x2="3792.2" y2="1427.8" stroke="#d4d4d4" stroke-width="1"/><line x1="83" y1="1475.8" x2="3792.2" y2="1475.8" stroke="#d4d4d4" stroke-width="1"/><line x1="83" y1="1523.9" x2="3792.2" y2="1523.9" stroke="#d4d4d4" stroke-width="1"/><line x1="83" y1="1571.9" x2="3792.2" y2="1571.9" stroke="#d4d4d4" stroke-width="1"/><line x1="83" y1="1619.9" x2="3792.2" y2="1619.9" stroke="#d4d4d4" stroke-width="1"/><line x1="83" y1="1668.0" x2="3792.2" y2="1668.0" stroke="#d4d4d4" stroke-width="1"/><line x1="83" y1="1716.0" x2="3792.2" y2="1716.0" stroke="#d4d4d4" stroke-width="1"/><line x1="83" y1="1764.0" x2="3792.2" y2="1764.0" stroke="#d4d4d4" stroke-width="1"/><line x1="83" y1="1812.0" x2="3792.2" y2="1812.0" stroke="#d4d4d4" stroke-width="1"/><line x1="83" y1="1860.1" x2="3792.2" y2="1860.1" stroke="#d4d4d4" stroke-width="1"/><line x1="83" y1="1908.1" x2="3792.2" y2="1908.1" stroke="#d4d4d4" stroke-width="1"/><line x1="83" y1="1956.1" x2="3792.2" y2="1956.1" stroke="#d4d4d4" stroke-width="1"/><line x1="250.4" y1="607.3" x2="250.4" y2="1929.3" stroke="#d4d4d4" stroke-width="1"/><line x1="418.4" y1="607.3" x2="418.4" y2="1929.3" stroke="#d4d4d4" stroke-width="1"/><line x1="587.0" y1="607.3" x2="587.0" y2="1929.3" stroke="#d4d4d4" stroke-width="1"/><line x1="832.3" y1="607.3" x2="832.3" y2="1929.3" stroke="#d4d4d4" stroke-width="1"/><line x1="1153.7" y1="607.3" x2="1153.7" y2="1929.3" stroke="#d4d4d4" stroke-width="1"/><line x1="1398.7" y1="607.3" x2="1398.7" y2="1929.3" stroke="#d4d4d4" stroke-width="1"/><line x1="1582.5" y1="607.3" x2="1582.5" y2="1929.3" stroke="#d4d4d4" stroke-width="1"/><line x1="1750.6" y1="607.3" x2="1750.6" y2="1929.3" stroke="#d4d4d4" stroke-width="1"/><line x1="1918.3" y1="607.3" x2="1918.3" y2="1929.3" stroke="#d4d4d4" stroke-width="1"/><line x1="2154.4" y1="607.3" x2="2154.4" y2="1929.3" stroke="#d4d4d4" stroke-width="1"/><line x1="2322.0" y1="607.3" x2="2322.0" y2="1929.3" stroke="#d4d4d4" stroke-width="1"/><line x1="2490.2" y1="607.3" x2="2490.2" y2="1929.3" stroke="#d4d4d4" stroke-width="1"/><line x1="2659.3" y1="607.3" x2="2659.3" y2="1929.3" stroke="#d4d4d4" stroke-width="1"/><line x1="2827.5" y1="607.3" x2="2827.5" y2="1929.3" stroke="#d4d4d4" stroke-width="1"/><line x1="2995.0" y1="607.3" x2="2995.0" y2="1929.3" stroke="#d4d4d4" stroke-width="1"/><line x1="3163.3" y1="607.3" x2="3163.3" y2="1929.3" stroke="#d4d4d4" stroke-width="1"/><line x1="3330.8" y1="607.3" x2="3330.8" y2="1929.3" stroke="#d4d4d4" stroke-width="1"/><line x1="3499.1" y1="607.3" x2="3499.1" y2="1929.3" stroke="#d4d4d4" stroke-width="1"/><line x1="3667.5" y1="607.3" x2="3667.5" y2="1929.3" stroke="#d4d4d4" stroke-width="1"/><line x1="82.6" y1="560.0" x2="82.6" y2="1929.3" stroke="#9c9c9c" stroke-width="1.3"/><line x1="3792.2" y1="605.0" x2="3792.2" y2="1929.3" stroke="#a0a0a0" stroke-width="1.3"/><line x1="0" y1="1929.3" x2="3792.2" y2="1929.3" stroke="#a0a0a0" stroke-width="1.3"/><path d="M79 564.6 L79 603.8 L39.6 603.8 Z" fill="#b4b4b4"/><rect x="1153.7" y="604.4" width="245.0" height="3" fill="#217346"/><rect x="80" y="1139.6" width="3" height="48.0" fill="#217346"/></svg>
<div class="t" style="top:567.6px;font-size:30.00px;line-height:33.51px;color:#222;left:-833.3px;width:2000px;text-align:center;">D</div>
<div class="t" style="top:567.6px;font-size:30.00px;line-height:33.51px;color:#222;left:-665.6px;width:2000px;text-align:center;">E</div>
<div class="t" style="top:567.6px;font-size:30.00px;line-height:33.51px;color:#222;left:-497.3px;width:2000px;text-align:center;">F</div>
<div class="t" style="top:567.6px;font-size:30.00px;line-height:33.51px;color:#222;left:-290.4px;width:2000px;text-align:center;">G</div>
<div class="t" style="top:567.6px;font-size:30.00px;line-height:33.51px;color:#222;left:-7.0px;width:2000px;text-align:center;">H</div>
<div class="t" style="top:567.6px;font-size:30.00px;line-height:33.51px;color:#217346;left:276.2px;width:2000px;text-align:center;">I</div>
<div class="t" style="top:567.6px;font-size:30.00px;line-height:33.51px;color:#222;left:490.6px;width:2000px;text-align:center;">J</div>
<div class="t" style="top:567.6px;font-size:30.00px;line-height:33.51px;color:#222;left:666.5px;width:2000px;text-align:center;">K</div>
<div class="t" style="top:567.6px;font-size:30.00px;line-height:33.51px;color:#222;left:834.4px;width:2000px;text-align:center;">L</div>
<div class="t" style="top:567.6px;font-size:30.00px;line-height:33.51px;color:#222;left:1036.3px;width:2000px;text-align:center;">M</div>
<div class="t" style="top:567.6px;font-size:30.00px;line-height:33.51px;color:#222;left:1238.2px;width:2000px;text-align:center;">N</div>
<div class="t" style="top:567.6px;font-size:30.00px;line-height:33.51px;color:#222;left:1406.1px;width:2000px;text-align:center;">O</div>
<div class="t" style="top:567.6px;font-size:30.00px;line-height:33.51px;color:#222;left:1574.8px;width:2000px;text-align:center;">P</div>
<div class="t" style="top:567.6px;font-size:30.00px;line-height:33.51px;color:#222;left:1743.4px;width:2000px;text-align:center;">Q</div>
<div class="t" style="top:567.6px;font-size:30.00px;line-height:33.51px;color:#222;left:1911.2px;width:2000px;text-align:center;">R</div>
<div class="t" style="top:567.6px;font-size:30.00px;line-height:33.51px;color:#222;left:2079.2px;width:2000px;text-align:center;">S</div>
<div class="t" style="top:567.6px;font-size:30.00px;line-height:33.51px;color:#222;left:2247.1px;width:2000px;text-align:center;">T</div>
<div class="t" style="top:567.6px;font-size:30.00px;line-height:33.51px;color:#222;left:2414.9px;width:2000px;text-align:center;">U</div>
<div class="t" style="top:567.6px;font-size:30.00px;line-height:33.51px;color:#222;left:2583.3px;width:2000px;text-align:center;">V</div>
<div class="t" style="top:567.6px;font-size:30.00px;line-height:33.51px;color:#222;left:2752.0px;width:2000px;text-align:center;">W</div>
<div class="t" style="top:615.1px;font-size:33.00px;line-height:36.86px;color:#222;left:-959.5px;width:2000px;text-align:center;">1</div>
<div class="t" style="top:676.4px;font-size:33.00px;line-height:36.86px;color:#222;left:-959.5px;width:2000px;text-align:center;">2</div>
<div class="t" style="top:737.2px;font-size:33.00px;line-height:36.86px;color:#222;left:-959.5px;width:2000px;text-align:center;">3</div>
<div class="t" style="top:797.9px;font-size:33.00px;line-height:36.86px;color:#222;left:-959.5px;width:2000px;text-align:center;">4</div>
<div class="t" style="top:859.3px;font-size:33.00px;line-height:36.86px;color:#222;left:-959.5px;width:2000px;text-align:center;">5</div>
<div class="t" style="top:907.3px;font-size:33.00px;line-height:36.86px;color:#222;left:-959.5px;width:2000px;text-align:center;">6</div>
<div class="t" style="top:955.4px;font-size:33.00px;line-height:36.86px;color:#222;left:-959.5px;width:2000px;text-align:center;">7</div>
<div class="t" style="top:1003.4px;font-size:33.00px;line-height:36.86px;color:#222;left:-959.5px;width:2000px;text-align:center;">8</div>
<div class="t" style="top:1051.4px;font-size:33.00px;line-height:36.86px;color:#222;left:-959.5px;width:2000px;text-align:center;">9</div>
<div class="t" style="top:1099.5px;font-size:33.00px;line-height:36.86px;color:#222;left:-959.5px;width:2000px;text-align:center;">10</div>
<div class="t" style="top:1147.5px;font-size:33.00px;line-height:36.86px;color:#217346;left:-959.5px;width:2000px;text-align:center;">11</div>
<div class="t" style="top:1195.5px;font-size:33.00px;line-height:36.86px;color:#222;left:-959.5px;width:2000px;text-align:center;">12</div>
<div class="t" style="top:1243.5px;font-size:33.00px;line-height:36.86px;color:#222;left:-959.5px;width:2000px;text-align:center;">13</div>
<div class="t" style="top:1291.6px;font-size:33.00px;line-height:36.86px;color:#222;left:-959.5px;width:2000px;text-align:center;">14</div>
<div class="t" style="top:1339.6px;font-size:33.00px;line-height:36.86px;color:#222;left:-959.5px;width:2000px;text-align:center;">15</div>
<div class="t" style="top:1387.6px;font-size:33.00px;line-height:36.86px;color:#222;left:-959.5px;width:2000px;text-align:center;">16</div>
<div class="t" style="top:1435.7px;font-size:33.00px;line-height:36.86px;color:#222;left:-959.5px;width:2000px;text-align:center;">17</div>
<div class="t" style="top:1483.7px;font-size:33.00px;line-height:36.86px;color:#222;left:-959.5px;width:2000px;text-align:center;">18</div>
<div class="t" style="top:1531.7px;font-size:33.00px;line-height:36.86px;color:#222;left:-959.5px;width:2000px;text-align:center;">19</div>
<div class="t" style="top:1579.8px;font-size:33.00px;line-height:36.86px;color:#222;left:-959.5px;width:2000px;text-align:center;">20</div>
<div class="t" style="top:1627.8px;font-size:33.00px;line-height:36.86px;color:#222;left:-959.5px;width:2000px;text-align:center;">21</div>
<div class="t" style="top:1675.8px;font-size:33.00px;line-height:36.86px;color:#222;left:-959.5px;width:2000px;text-align:center;">22</div>
<div class="t" style="top:1723.8px;font-size:33.00px;line-height:36.86px;color:#222;left:-959.5px;width:2000px;text-align:center;">23</div>
<div class="t" style="top:1771.9px;font-size:33.00px;line-height:36.86px;color:#222;left:-959.5px;width:2000px;text-align:center;">24</div>
<div class="t" style="top:1819.9px;font-size:33.00px;line-height:36.86px;color:#222;left:-959.5px;width:2000px;text-align:center;">25</div>
<div class="t" style="top:1867.9px;font-size:33.00px;line-height:36.86px;color:#222;left:-959.5px;width:2000px;text-align:center;">26</div>
<div class="t" style="top:1916.0px;font-size:33.00px;line-height:36.86px;color:#222;left:-959.5px;width:2000px;text-align:center;">27</div>
<div style="position:absolute;left:83px;top:607px;width:3709px;height:1322px;overflow:hidden;">
<div class="t" style="top:8.4px;right:3547.1px;text-align:right;font-size:33.80px;line-height:37.75px;color:#000;">F%</div>
<div class="t" style="top:8.4px;right:3379.1px;text-align:right;font-size:33.80px;line-height:37.75px;color:#000;">M%</div>
<div class="t" style="top:8.4px;right:3210.5px;text-align:right;font-size:33.80px;line-height:37.75px;color:#000;">Year</div>
<div class="t" style="top:8.4px;right:2965.2px;text-align:right;font-size:33.80px;line-height:37.75px;color:#000;">Logistic</div>
<div class="t" style="top:8.4px;right:2643.8px;text-align:right;font-size:33.80px;line-height:37.75px;color:#000;">error^2</div>
<div class="t" style="top:8.4px;right:2398.8px;text-align:right;font-size:33.80px;line-height:37.75px;color:#000;">Logistic</div>
<div class="t" style="top:8.4px;right:2215.0px;text-align:right;font-size:33.80px;line-height:37.75px;color:#000;">error^2</div>
<div class="t" style="top:65.0px;font-size:33.70px;line-height:37.64px;color:#000;font-weight:bold;left:511.5px;transform:scaleX(0.992);transform-origin:0 0;">Midpoint mu=</div>
<div class="t" style="top:65.0px;font-size:33.70px;line-height:37.64px;color:#000;font-weight:bold;left:1077.5px;transform:scaleX(0.992);transform-origin:0 0;">Midpoint mu=</div>
<div class="t" style="top:126.0px;right:2967.0px;text-align:right;font-size:33.70px;line-height:37.64px;color:#000;font-weight:bold;">1996.040242</div>
<div class="t" style="top:126.0px;font-size:33.70px;line-height:37.64px;color:#ff0000;font-weight:bold;left:755.0px;transform:scaleX(0.895);transform-origin:0 0;">SSR error=</div>
<div class="t" style="top:126.0px;right:2399.4px;text-align:right;font-size:33.70px;line-height:37.64px;color:#000;font-weight:bold;">2021.4</div>
<div class="t" style="top:126.0px;font-size:33.70px;line-height:37.64px;color:#ff0000;font-weight:bold;left:1321.0px;transform:scaleX(0.895);transform-origin:0 0;">SSR error=</div>
<div class="t" style="top:187.0px;font-size:33.70px;line-height:37.64px;color:#000;font-weight:bold;left:512.7px;transform:scaleX(0.910);transform-origin:0 0;">Shallowness s=</div>
<div class="t" style="top:187.0px;right:2645.0px;text-align:right;font-size:33.70px;line-height:37.64px;color:#ff0000;font-weight:bold;">0.723683536</div>
<div class="t" style="top:187.0px;font-size:33.70px;line-height:37.64px;color:#000;font-weight:bold;left:1077.5px;transform:scaleX(0.910);transform-origin:0 0;">Shallowness s=</div>
<div class="t" style="top:187.0px;right:2216.4px;text-align:right;font-size:33.70px;line-height:37.64px;color:#ff0000;font-weight:bold;">0.7287638</div>
<div class="t" style="top:248.5px;font-size:33.70px;line-height:37.64px;color:#000;font-weight:bold;left:-372.5px;width:2000px;text-align:center;">11.2244387</div>
<div class="t" style="top:248.5px;font-size:33.70px;line-height:37.64px;color:#000;font-weight:bold;left:193.0px;width:2000px;text-align:center;">19.17</div>
<div class="t" style="top:300.2px;font-size:33.70px;line-height:37.64px;color:#000;font-weight:bold;left:-372.5px;width:2000px;text-align:center;transform:scaleX(0.952);transform-origin:50% 0;">Supremum k=</div>
<div class="t" style="top:300.2px;font-size:33.70px;line-height:37.64px;color:#000;font-weight:bold;left:193.5px;width:2000px;text-align:center;transform:scaleX(0.952);transform-origin:50% 0;">Supremum k=</div>
<div class="t" style="top:347.5px;font-size:33.70px;line-height:37.64px;color:#000;font-weight:bold;left:-373.2px;width:2000px;text-align:center;">0.237999257</div>
<div class="t" style="top:347.5px;font-size:33.70px;line-height:37.64px;color:#000;font-weight:bold;left:193.0px;width:2000px;text-align:center;">0.5</div>
<div class="t" style="top:65.1px;font-size:33.80px;line-height:37.75px;color:#000;left:1841.0px;">regressed s=</div>
<div class="t" style="top:126.4px;font-size:33.80px;line-height:37.75px;color:#000;left:1841.0px;">regressed k=</div>
<div class="t" style="top:187.4px;font-size:33.80px;line-height:37.75px;color:#000;left:1841.0px;">set mu to:</div>
<div class="t" style="top:248.4px;font-size:33.80px;line-height:37.75px;color:#000;left:1841.0px;">Optimum SSR=</div>
<div class="t" style="top:65.4px;right:1475.5px;text-align:right;font-size:33.80px;line-height:37.75px;color:#000;">8</div>
<div class="t" style="top:65.4px;right:1307.3px;text-align:right;font-size:33.80px;line-height:37.75px;color:#000;">10</div>
<div class="t" style="top:58.0px;right:1140.7px;text-align:right;font-size:42.00px;line-height:46.91px;color:#000;font-weight:bold;">11</div>
<div class="t" style="top:65.4px;right:970.0px;text-align:right;font-size:33.80px;line-height:37.75px;color:#000;">11</div>
<div class="t" style="top:65.4px;right:802.5px;text-align:right;font-size:33.80px;line-height:37.75px;color:#000;">12</div>
<div class="t" style="top:65.4px;right:634.2px;text-align:right;font-size:33.80px;line-height:37.75px;color:#000;">13</div>
<div class="t" style="top:65.4px;right:466.7px;text-align:right;font-size:33.80px;line-height:37.75px;color:#000;">15</div>
<div class="t" style="top:65.4px;right:298.4px;text-align:right;font-size:33.80px;line-height:37.75px;color:#000;">17</div>
<div class="t" style="top:65.4px;right:130.0px;text-align:right;font-size:33.80px;line-height:37.75px;color:#000;">18</div>
<div class="t" style="top:65.4px;right:-38.3px;text-align:right;font-size:33.80px;line-height:37.75px;color:#000;">20</div>
<div class="t" style="top:126.6px;right:1475.5px;text-align:right;font-size:33.80px;line-height:37.75px;color:#000;">0.2</div>
<div class="t" style="top:126.6px;right:1307.3px;text-align:right;font-size:33.80px;line-height:37.75px;color:#000;">0.22</div>
<div class="t" style="top:119.2px;right:1140.7px;text-align:right;font-size:42.00px;line-height:46.91px;color:#000;font-weight:bold;">0.23</div>
<div class="t" style="top:126.6px;right:970.0px;text-align:right;font-size:33.80px;line-height:37.75px;color:#000;">0.24</div>
<div class="t" style="top:126.6px;right:802.5px;text-align:right;font-size:33.80px;line-height:37.75px;color:#000;">0.25</div>
<div class="t" style="top:126.6px;right:634.2px;text-align:right;font-size:33.80px;line-height:37.75px;color:#000;">0.26</div>
<div class="t" style="top:126.6px;right:466.7px;text-align:right;font-size:33.80px;line-height:37.75px;color:#000;">0.32</div>
<div class="t" style="top:126.6px;right:298.4px;text-align:right;font-size:33.80px;line-height:37.75px;color:#000;">0.38</div>
<div class="t" style="top:126.6px;right:130.0px;text-align:right;font-size:33.80px;line-height:37.75px;color:#000;">0.43</div>
<div class="t" style="top:126.6px;right:-38.3px;text-align:right;font-size:33.80px;line-height:37.75px;color:#000;">0.48</div>
<div class="t" style="top:187.8px;right:1475.5px;text-align:right;font-size:33.80px;line-height:37.75px;color:#000;">1990</div>
<div class="t" style="top:187.8px;right:1307.3px;text-align:right;font-size:33.80px;line-height:37.75px;color:#000;">1994</div>
<div class="t" style="top:180.4px;right:1140.7px;text-align:right;font-size:42.00px;line-height:46.91px;color:#000;font-weight:bold;">1995</div>
<div class="t" style="top:187.8px;right:970.0px;text-align:right;font-size:33.80px;line-height:37.75px;color:#000;">1996</div>
<div class="t" style="top:187.8px;right:802.5px;text-align:right;font-size:33.80px;line-height:37.75px;color:#000;">1997</div>
<div class="t" style="top:187.8px;right:634.2px;text-align:right;font-size:33.80px;line-height:37.75px;color:#000;">2000</div>
<div class="t" style="top:187.8px;right:466.7px;text-align:right;font-size:33.80px;line-height:37.75px;color:#000;">2006</div>
<div class="t" style="top:187.8px;right:298.4px;text-align:right;font-size:33.80px;line-height:37.75px;color:#000;">2012</div>
<div class="t" style="top:187.8px;right:130.0px;text-align:right;font-size:33.80px;line-height:37.75px;color:#000;">2016</div>
<div class="t" style="top:187.8px;right:-38.3px;text-align:right;font-size:33.80px;line-height:37.75px;color:#000;">2020</div>
<div class="t" style="top:248.5px;right:1475.5px;text-align:right;font-size:33.70px;line-height:37.64px;color:#000;font-weight:bold;">0.726324</div>
<div class="t" style="top:248.5px;right:1307.3px;text-align:right;font-size:33.70px;line-height:37.64px;color:#000;font-weight:bold;">0.724061</div>
<div class="t" style="top:241.0px;right:1140.7px;text-align:right;font-size:42.00px;line-height:46.91px;color:#000;font-weight:bold;">0.7238</div>
<div class="t" style="top:248.5px;right:970.0px;text-align:right;font-size:33.70px;line-height:37.64px;color:#000;font-weight:bold;">0.723862</div>
<div class="t" style="top:248.5px;right:802.5px;text-align:right;font-size:33.70px;line-height:37.64px;color:#000;font-weight:bold;">0.724054</div>
<div class="t" style="top:248.5px;right:634.2px;text-align:right;font-size:33.70px;line-height:37.64px;color:#000;font-weight:bold;">0.72509</div>
<div class="t" style="top:248.5px;right:466.7px;text-align:right;font-size:33.70px;line-height:37.64px;color:#000;font-weight:bold;">0.725515</div>
<div class="t" style="top:248.5px;right:298.4px;text-align:right;font-size:33.70px;line-height:37.64px;color:#000;font-weight:bold;">0.726899</div>
<div class="t" style="top:248.5px;right:130.0px;text-align:right;font-size:33.70px;line-height:37.64px;color:#000;font-weight:bold;">0.727767</div>
<div class="t" style="top:248.5px;right:-38.3px;text-align:right;font-size:33.70px;line-height:37.64px;color:#000;font-weight:bold;">0.728352</div>
<div class="t" style="top:443.5px;right:3547.1px;text-align:right;font-size:33.80px;line-height:37.75px;color:#000;">0%</div>
<div class="t" style="top:443.5px;right:3379.1px;text-align:right;font-size:33.80px;line-height:37.75px;color:#000;">100%</div>
<div class="t" style="top:443.5px;font-size:33.80px;line-height:37.75px;color:#000;left:341.4px;">1961</div>
<div class="t" style="top:443.5px;right:2965.2px;text-align:right;font-size:33.80px;line-height:37.75px;color:#000;">0.010047778</div>
<div class="t" style="top:443.5px;right:2643.8px;text-align:right;font-size:33.80px;line-height:37.75px;color:#000;">0.000100958</div>
<div class="t" style="top:443.5px;right:2400.3px;text-align:right;font-size:33.80px;line-height:37.75px;color:#000;">0.020530742</div>
<div class="t" style="top:443.5px;right:2215.0px;text-align:right;font-size:33.80px;line-height:37.75px;color:#000;">0.0004215</div>
<div class="t" style="top:491.5px;right:3547.1px;text-align:right;font-size:33.80px;line-height:37.75px;color:#000;">0%</div>
<div class="t" style="top:491.5px;right:3379.1px;text-align:right;font-size:33.80px;line-height:37.75px;color:#000;">100%</div>
<div class="t" style="top:491.5px;font-size:33.80px;line-height:37.75px;color:#000;left:341.4px;">1962</div>
<div class="t" style="top:491.5px;right:2965.2px;text-align:right;font-size:33.80px;line-height:37.75px;color:#000;">0.010940995</div>
<div class="t" style="top:491.5px;right:2643.8px;text-align:right;font-size:33.80px;line-height:37.75px;color:#000;">0.000119705</div>
<div class="t" style="top:491.5px;right:2400.3px;text-align:right;font-size:33.80px;line-height:37.75px;color:#000;">0.021582695</div>
<div class="t" style="top:491.5px;right:2215.0px;text-align:right;font-size:33.80px;line-height:37.75px;color:#000;">0.0004658</div>
<div class="t" style="top:539.6px;right:3547.1px;text-align:right;font-size:33.80px;line-height:37.75px;color:#000;">20%</div>
<div class="t" style="top:539.6px;right:3379.1px;text-align:right;font-size:33.80px;line-height:37.75px;color:#000;">80%</div>
<div class="t" style="top:539.6px;font-size:33.80px;line-height:37.75px;color:#000;left:341.4px;">1963</div>
<div class="t" style="top:539.6px;right:2965.2px;text-align:right;font-size:33.80px;line-height:37.75px;color:#000;">0.011909467</div>
<div class="t" style="top:539.6px;right:2643.8px;text-align:right;font-size:33.80px;line-height:37.75px;color:#000;">0.035378049</div>
<div class="t" style="top:539.6px;right:2400.3px;text-align:right;font-size:33.80px;line-height:37.75px;color:#000;">0.022685997</div>
<div class="t" style="top:539.6px;right:2215.0px;text-align:right;font-size:33.80px;line-height:37.75px;color:#000;">0.0314403</div>
<div class="t" style="top:587.6px;right:3547.1px;text-align:right;font-size:33.80px;line-height:37.75px;color:#000;">0%</div>
<div class="t" style="top:587.6px;right:3379.1px;text-align:right;font-size:33.80px;line-height:37.75px;color:#000;">100%</div>
<div class="t" style="top:587.6px;font-size:33.80px;line-height:37.75px;color:#000;left:341.4px;">1964</div>
<div class="t" style="top:587.6px;right:2965.2px;text-align:right;font-size:33.80px;line-height:37.75px;color:#000;">0.012958773</div>
<div class="t" style="top:587.6px;right:2643.8px;text-align:right;font-size:33.80px;line-height:37.75px;color:#000;">0.00016793</div>
<div class="t" style="top:587.6px;right:2400.3px;text-align:right;font-size:33.80px;line-height:37.75px;color:#000;">0.023842889</div>
<div class="t" style="top:587.6px;right:2215.0px;text-align:right;font-size:33.80px;line-height:37.75px;color:#000;">0.0005685</div>
<div class="t" style="top:635.6px;right:3547.1px;text-align:right;font-size:33.80px;line-height:37.75px;color:#000;">0%</div>
<div class="t" style="top:635.6px;right:3379.1px;text-align:right;font-size:33.80px;line-height:37.75px;color:#000;">100%</div>
<div class="t" style="top:635.6px;font-size:33.80px;line-height:37.75px;color:#000;left:341.4px;">1965</div>
<div class="t" style="top:635.6px;right:2965.2px;text-align:right;font-size:33.80px;line-height:37.75px;color:#000;">0.014094767</div>
<div class="t" style="top:635.6px;right:2643.8px;text-align:right;font-size:33.80px;line-height:37.75px;color:#000;">0.000198662</div>
<div class="t" style="top:635.6px;right:2400.3px;text-align:right;font-size:33.80px;line-height:37.75px;color:#000;">0.02505568</div>
<div class="t" style="top:635.6px;right:2215.0px;text-align:right;font-size:33.80px;line-height:37.75px;color:#000;">0.0006278</div>
<div class="t" style="top:683.7px;right:3547.1px;text-align:right;font-size:33.80px;line-height:37.75px;color:#000;">0%</div>
<div class="t" style="top:683.7px;right:3379.1px;text-align:right;font-size:33.80px;line-height:37.75px;color:#000;">100%</div>
<div class="t" style="top:683.7px;font-size:33.80px;line-height:37.75px;color:#000;left:341.4px;">1966</div>
<div class="t" style="top:683.7px;right:2965.2px;text-align:right;font-size:33.80px;line-height:37.75px;color:#000;">0.015323564</div>
<div class="t" style="top:683.7px;right:2643.8px;text-align:right;font-size:33.80px;line-height:37.75px;color:#000;">0.000234812</div>
<div class="t" style="top:683.7px;right:2400.3px;text-align:right;font-size:33.80px;line-height:37.75px;color:#000;">0.02632675</div>
<div class="t" style="top:683.7px;right:2215.0px;text-align:right;font-size:33.80px;line-height:37.75px;color:#000;">0.0006931</div>
<div class="t" style="top:731.7px;right:3547.1px;text-align:right;font-size:33.80px;line-height:37.75px;color:#000;">0%</div>
<div class="t" style="top:731.7px;right:3379.1px;text-align:right;font-size:33.80px;line-height:37.75px;color:#000;">100%</div>
<div class="t" style="top:731.7px;font-size:33.80px;line-height:37.75px;color:#000;left:341.4px;">1967</div>
<div class="t" style="top:731.7px;right:2965.2px;text-align:right;font-size:33.80px;line-height:37.75px;color:#000;">0.016651521</div>
<div class="t" style="top:731.7px;right:2643.8px;text-align:right;font-size:33.80px;line-height:37.75px;color:#000;">0.000277273</div>
<div class="t" style="top:731.7px;right:2400.3px;text-align:right;font-size:33.80px;line-height:37.75px;color:#000;">0.027658547</div>
<div class="t" style="top:731.7px;right:2215.0px;text-align:right;font-size:33.80px;line-height:37.75px;color:#000;">0.000765</div>
<div class="t" style="top:779.7px;right:3547.1px;text-align:right;font-size:33.80px;line-height:37.75px;color:#000;">0%</div>
<div class="t" style="top:779.7px;right:3379.1px;text-align:right;font-size:33.80px;line-height:37.75px;color:#000;">100%</div>
<div class="t" style="top:779.7px;font-size:33.80px;line-height:37.75px;color:#000;left:341.4px;">1968</div>
<div class="t" style="top:779.7px;right:2965.2px;text-align:right;font-size:33.80px;line-height:37.75px;color:#000;">0.018085214</div>
<div class="t" style="top:779.7px;right:2643.8px;text-align:right;font-size:33.80px;line-height:37.75px;color:#000;">0.000327075</div>
<div class="t" style="top:779.7px;right:2400.3px;text-align:right;font-size:33.80px;line-height:37.75px;color:#000;">0.029053583</div>
<div class="t" style="top:779.7px;right:2215.0px;text-align:right;font-size:33.80px;line-height:37.75px;color:#000;">0.0008441</div>
<div class="t" style="top:827.7px;right:3547.1px;text-align:right;font-size:33.80px;line-height:37.75px;color:#000;">0%</div>
<div class="t" style="top:827.7px;right:3379.1px;text-align:right;font-size:33.80px;line-height:37.75px;color:#000;">100%</div>
<div class="t" style="top:827.7px;font-size:33.80px;line-height:37.75px;color:#000;left:341.4px;">1969</div>
<div class="t" style="top:827.7px;right:2965.2px;text-align:right;font-size:33.80px;line-height:37.75px;color:#000;">0.0196314</div>
<div class="t" style="top:827.7px;right:2643.8px;text-align:right;font-size:33.80px;line-height:37.75px;color:#000;">0.000385392</div>
<div class="t" style="top:827.7px;right:2400.3px;text-align:right;font-size:33.80px;line-height:37.75px;color:#000;">0.030514436</div>
<div class="t" style="top:827.7px;right:2215.0px;text-align:right;font-size:33.80px;line-height:37.75px;color:#000;">0.0009311</div>
<div class="t" style="top:875.8px;right:3547.1px;text-align:right;font-size:33.80px;line-height:37.75px;color:#000;">0%</div>
<div class="t" style="top:875.8px;right:3379.1px;text-align:right;font-size:33.80px;line-height:37.75px;color:#000;">100%</div>
<div class="t" style="top:875.8px;font-size:33.80px;line-height:37.75px;color:#000;left:341.4px;">1970</div>
<div class="t" style="top:875.8px;right:2965.2px;text-align:right;font-size:33.80px;line-height:37.75px;color:#000;">0.021296975</div>
<div class="t" style="top:875.8px;right:2643.8px;text-align:right;font-size:33.80px;line-height:37.75px;color:#000;">0.000453561</div>
<div class="t" style="top:875.8px;right:2400.3px;text-align:right;font-size:33.80px;line-height:37.75px;color:#000;">0.032043745</div>
<div class="t" style="top:875.8px;right:2215.0px;text-align:right;font-size:33.80px;line-height:37.75px;color:#000;">0.0010268</div>
<div class="t" style="top:923.8px;right:3547.1px;text-align:right;font-size:33.80px;line-height:37.75px;color:#000;">0%</div>
<div class="t" style="top:923.8px;right:3379.1px;text-align:right;font-size:33.80px;line-height:37.75px;color:#000;">100%</div>
<div class="t" style="top:923.8px;font-size:33.80px;line-height:37.75px;color:#000;left:341.4px;">1971</div>
<div class="t" style="top:923.8px;right:2965.2px;text-align:right;font-size:33.80px;line-height:37.75px;color:#000;">0.023088919</div>
<div class="t" style="top:923.8px;right:2643.8px;text-align:right;font-size:33.80px;line-height:37.75px;color:#000;">0.000533098</div>
<div class="t" style="top:923.8px;right:2400.3px;text-align:right;font-size:33.80px;line-height:37.75px;color:#000;">0.033644206</div>
<div class="t" style="top:923.8px;right:2215.0px;text-align:right;font-size:33.80px;line-height:37.75px;color:#000;">0.0011319</div>
<div class="t" style="top:971.8px;right:3547.1px;text-align:right;font-size:33.80px;line-height:37.75px;color:#000;">0%</div>
<div class="t" style="top:971.8px;right:3379.1px;text-align:right;font-size:33.80px;line-height:37.75px;color:#000;">100%</div>
<div class="t" style="top:971.8px;font-size:33.80px;line-height:37.75px;color:#000;left:341.4px;">1972</div>
<div class="t" style="top:971.8px;right:2965.2px;text-align:right;font-size:33.80px;line-height:37.75px;color:#000;">0.025014235</div>
<div class="t" style="top:971.8px;right:2643.8px;text-align:right;font-size:33.80px;line-height:37.75px;color:#000;">0.000625712</div>
<div class="t" style="top:971.8px;right:2400.3px;text-align:right;font-size:33.80px;line-height:37.75px;color:#000;">0.035318572</div>
<div class="t" style="top:971.8px;right:2215.0px;text-align:right;font-size:33.80px;line-height:37.75px;color:#000;">0.0012474</div>
<div class="t" style="top:1019.9px;right:3547.1px;text-align:right;font-size:33.80px;line-height:37.75px;color:#000;">0%</div>
<div class="t" style="top:1019.9px;right:3379.1px;text-align:right;font-size:33.80px;line-height:37.75px;color:#000;">100%</div>
<div class="t" style="top:1019.9px;font-size:33.80px;line-height:37.75px;color:#000;left:341.4px;">1973</div>
<div class="t" style="top:1019.9px;right:2965.2px;text-align:right;font-size:33.80px;line-height:37.75px;color:#000;">0.027079867</div>
<div class="t" style="top:1019.9px;right:2643.8px;text-align:right;font-size:33.80px;line-height:37.75px;color:#000;">0.000733319</div>
<div class="t" style="top:1019.9px;right:2400.3px;text-align:right;font-size:33.80px;line-height:37.75px;color:#000;">0.037069641</div>
<div class="t" style="top:1019.9px;right:2215.0px;text-align:right;font-size:33.80px;line-height:37.75px;color:#000;">0.0013742</div>
<div class="t" style="top:1067.9px;right:3547.1px;text-align:right;font-size:33.80px;line-height:37.75px;color:#000;">0%</div>
<div class="t" style="top:1067.9px;right:3379.1px;text-align:right;font-size:33.80px;line-height:37.75px;color:#000;">100%</div>
<div class="t" style="top:1067.9px;font-size:33.80px;line-height:37.75px;color:#000;left:341.4px;">1974</div>
<div class="t" style="top:1067.9px;right:2965.2px;text-align:right;font-size:33.80px;line-height:37.75px;color:#000;">0.029292616</div>
<div class="t" style="top:1067.9px;right:2643.8px;text-align:right;font-size:33.80px;line-height:37.75px;color:#000;">0.000858057</div>
<div class="t" style="top:1067.9px;right:2400.3px;text-align:right;font-size:33.80px;line-height:37.75px;color:#000;">0.038900259</div>
<div class="t" style="top:1067.9px;right:2215.0px;text-align:right;font-size:33.80px;line-height:37.75px;color:#000;">0.0015132</div>
<div class="t" style="top:1115.9px;right:3547.1px;text-align:right;font-size:33.80px;line-height:37.75px;color:#000;">0%</div>
<div class="t" style="top:1115.9px;right:3379.1px;text-align:right;font-size:33.80px;line-height:37.75px;color:#000;">100%</div>
<div class="t" style="top:1115.9px;font-size:33.80px;line-height:37.75px;color:#000;left:341.4px;">1975</div>
<div class="t" style="top:1115.9px;right:2965.2px;text-align:right;font-size:33.80px;line-height:37.75px;color:#000;">0.031659034</div>
<div class="t" style="top:1115.9px;right:2643.8px;text-align:right;font-size:33.80px;line-height:37.75px;color:#000;">0.001002294</div>
<div class="t" style="top:1115.9px;right:2400.3px;text-align:right;font-size:33.80px;line-height:37.75px;color:#000;">0.04081331</div>
<div class="t" style="top:1115.9px;right:2215.0px;text-align:right;font-size:33.80px;line-height:37.75px;color:#000;">0.0016657</div>
<div class="t" style="top:1164.0px;right:3547.1px;text-align:right;font-size:33.80px;line-height:37.75px;color:#000;">0%</div>
<div class="t" style="top:1164.0px;right:3379.1px;text-align:right;font-size:33.80px;line-height:37.75px;color:#000;">100%</div>
<div class="t" style="top:1164.0px;font-size:33.80px;line-height:37.75px;color:#000;left:341.4px;">1976</div>
<div class="t" style="top:1164.0px;right:2965.2px;text-align:right;font-size:33.80px;line-height:37.75px;color:#000;">0.03418531</div>
<div class="t" style="top:1164.0px;right:2643.8px;text-align:right;font-size:33.80px;line-height:37.75px;color:#000;">0.001168635</div>
<div class="t" style="top:1164.0px;right:2400.3px;text-align:right;font-size:33.80px;line-height:37.75px;color:#000;">0.042811705</div>
<div class="t" style="top:1164.0px;right:2215.0px;text-align:right;font-size:33.80px;line-height:37.75px;color:#000;">0.0018328</div>
<div class="t" style="top:1212.0px;right:3547.1px;text-align:right;font-size:33.80px;line-height:37.75px;color:#000;">0%</div>
<div class="t" style="top:1212.0px;right:3379.1px;text-align:right;font-size:33.80px;line-height:37.75px;color:#000;">100%</div>
<div class="t" style="top:1212.0px;font-size:33.80px;line-height:37.75px;color:#000;left:341.4px;">1977</div>
<div class="t" style="top:1212.0px;right:2965.2px;text-align:right;font-size:33.80px;line-height:37.75px;color:#000;">0.036877147</div>
<div class="t" style="top:1212.0px;right:2643.8px;text-align:right;font-size:33.80px;line-height:37.75px;color:#000;">0.001359924</div>
<div class="t" style="top:1212.0px;right:2400.3px;text-align:right;font-size:33.80px;line-height:37.75px;color:#000;">0.044898383</div>
<div class="t" style="top:1212.0px;right:2215.0px;text-align:right;font-size:33.80px;line-height:37.75px;color:#000;">0.0020159</div>
<div class="t" style="top:1260.0px;right:3547.1px;text-align:right;font-size:33.80px;line-height:37.75px;color:#000;">0%</div>
<div class="t" style="top:1260.0px;right:3379.1px;text-align:right;font-size:33.80px;line-height:37.75px;color:#000;">100%</div>
<div class="t" style="top:1260.0px;font-size:33.80px;line-height:37.75px;color:#000;left:341.4px;">1978</div>
<div class="t" style="top:1260.0px;right:2965.2px;text-align:right;font-size:33.80px;line-height:37.75px;color:#000;">0.039739617</div>
<div class="t" style="top:1260.0px;right:2643.8px;text-align:right;font-size:33.80px;line-height:37.75px;color:#000;">0.001579237</div>
<div class="t" style="top:1260.0px;right:2400.3px;text-align:right;font-size:33.80px;line-height:37.75px;color:#000;">0.047076295</div>
<div class="t" style="top:1260.0px;right:2215.0px;text-align:right;font-size:33.80px;line-height:37.75px;color:#000;">0.0022162</div>
<div class="t" style="top:1308.0px;right:3547.1px;text-align:right;font-size:33.80px;line-height:37.75px;color:#000;">0%</div>
<div class="t" style="top:1308.0px;right:3379.1px;text-align:right;font-size:33.80px;line-height:37.75px;color:#000;">100%</div>
<div class="t" style="top:1308.0px;font-size:33.80px;line-height:37.75px;color:#000;left:341.4px;">1979</div>
<div class="t" style="top:1308.0px;right:2965.2px;text-align:right;font-size:33.80px;line-height:37.75px;color:#000;">0.042777019</div>
<div class="t" style="top:1308.0px;right:2643.8px;text-align:right;font-size:33.80px;line-height:37.75px;color:#000;">0.001829873</div>
<div class="t" style="top:1308.0px;right:2400.3px;text-align:right;font-size:33.80px;line-height:37.75px;color:#000;">0.049348397</div>
<div class="t" style="top:1308.0px;right:2215.0px;text-align:right;font-size:33.80px;line-height:37.75px;color:#000;">0.0024353</div>
</div>
<svg style="position:absolute;left:0.0px;top:0.0px;" width="3840.0" height="2160.0" viewBox="0 0 3840.0 2160.0"><rect x="1152.6" y="1138.5" width="246.7" height="49.9" fill="none" stroke="#217346" stroke-width="2.8"/><rect x="1391.5" y="1180.5" width="12" height="12" fill="#fff"/><rect x="1393" y="1182" width="9" height="9" fill="#217346"/></svg>
<svg style="position:absolute;left:0.0px;top:0.0px;" width="3840.0" height="2160.0" viewBox="0 0 3840.0 2160.0"><rect x="3796" y="562" width="40.7" height="1367" fill="#dadada"/><rect x="3796.5" y="562.5" width="40" height="40" fill="#fff" stroke="#ababab" stroke-width="1"/><path d="M3806 584 L3825 584 L3815.5 575 Z" fill="#777"/><rect x="3796.5" y="603.6" width="40" height="233" fill="#fff" stroke="#ababab" stroke-width="1"/><rect x="3796.5" y="1889.4" width="40" height="39.6" fill="#fff" stroke="#ababab" stroke-width="1"/><path d="M3806 1905 L3825 1905 L3815.5 1915 Z" fill="#777"/></svg>
<svg style="position:absolute;left:1692.4px;top:875.0px;" width="1756.6" height="1005.7" viewBox="0 0 1756.6 1005.7"><defs><radialGradient id="bgG" gradientUnits="userSpaceOnUse" cx="878.3" cy="502.9" r="1012.1"><stop offset="0" stop-color="#535353"/><stop offset="0.5" stop-color="#4b4b4b"/><stop offset="0.75" stop-color="#3b3b3b"/><stop offset="0.88" stop-color="#2e2e2e"/><stop offset="1" stop-color="#242424"/></radialGradient><linearGradient id="mG" x1="0" y1="0" x2="0" y2="1"><stop offset="0" stop-color="#5c4dd2"/><stop offset="0.55" stop-color="#3a18c2"/><stop offset="1" stop-color="#2800b8"/></linearGradient><linearGradient id="fG" x1="0" y1="0" x2="0" y2="1"><stop offset="0" stop-color="#f64ad8"/><stop offset="0.5" stop-color="#ee20cc"/><stop offset="1" stop-color="#e800c0"/></linearGradient><filter id="tsh" x="-5%" y="-20%" width="110%" height="160%"><feGaussianBlur in="SourceAlpha" stdDeviation="2"/><feOffset dx="2" dy="3"/><feComponentTransfer><feFuncA type="linear" slope="0.8"/></feComponentTransfer><feMerge><feMergeNode/><feMergeNode in="SourceGraphic"/></feMerge></filter></defs><rect x="0" y="0" width="1756.6" height="1005.7" fill="url(#bgG)"/><text x="847.1" y="55.4" font-size="46" font-weight="bold" fill="#f2f2f2" text-anchor="middle" letter-spacing="3.35" filter="url(#tsh)">Proportion of Female and Male Astronauts Across</text><text x="847.1" y="121.8" font-size="46" font-weight="bold" fill="#f2f2f2" text-anchor="middle" letter-spacing="3.35" filter="url(#tsh)">Time</text><line x1="55.3" y1="149.4" x2="1697.6" y2="149.4" stroke="#505050" stroke-width="2.6"/><line x1="55.3" y1="211.8" x2="1697.6" y2="211.8" stroke="#505050" stroke-width="2.6"/><line x1="55.3" y1="274.1" x2="1697.6" y2="274.1" stroke="#505050" stroke-width="2.6"/><line x1="55.3" y1="336.5" x2="1697.6" y2="336.5" stroke="#505050" stroke-width="2.6"/><line x1="55.3" y1="398.8" x2="1697.6" y2="398.8" stroke="#505050" stroke-width="2.6"/><line x1="55.3" y1="461.2" x2="1697.6" y2="461.2" stroke="#505050" stroke-width="2.6"/><line x1="55.3" y1="523.6" x2="1697.6" y2="523.6" stroke="#505050" stroke-width="2.6"/><line x1="55.3" y1="585.9" x2="1697.6" y2="585.9" stroke="#505050" stroke-width="2.6"/><line x1="55.3" y1="648.3" x2="1697.6" y2="648.3" stroke="#505050" stroke-width="2.6"/><line x1="55.3" y1="710.6" x2="1697.6" y2="710.6" stroke="#505050" stroke-width="2.6"/><rect x="62.3" y="149.4" width="13.0" height="623.6" fill="#000" opacity="0.22"/><rect x="63.8" y="149.4" width="10.0" height="623.6" fill="url(#mG)"/><rect x="89.2" y="149.4" width="13.0" height="623.6" fill="#000" opacity="0.22"/><rect x="90.7" y="149.4" width="10.0" height="498.9" fill="url(#mG)"/><rect x="90.7" y="648.3" width="10.0" height="124.7" fill="url(#fG)"/><rect x="116.1" y="149.4" width="13.0" height="623.6" fill="#000" opacity="0.22"/><rect x="117.6" y="149.4" width="10.0" height="623.6" fill="url(#mG)"/><rect x="143.0" y="149.4" width="13.0" height="623.6" fill="#000" opacity="0.22"/><rect x="144.5" y="149.4" width="10.0" height="623.6" fill="url(#mG)"/><rect x="170.0" y="149.4" width="13.0" height="623.6" fill="#000" opacity="0.22"/><rect x="171.5" y="149.4" width="10.0" height="623.6" fill="url(#mG)"/><rect x="196.9" y="149.4" width="13.0" height="623.6" fill="#000" opacity="0.22"/><rect x="198.4" y="149.4" width="10.0" height="623.6" fill="url(#mG)"/><rect x="223.8" y="149.4" width="13.0" height="623.6" fill="#000" opacity="0.22"/><rect x="225.3" y="149.4" width="10.0" height="623.6" fill="url(#mG)"/><rect x="250.7" y="149.4" width="13.0" height="623.6" fill="#000" opacity="0.22"/><rect x="252.2" y="149.4" width="10.0" height="623.6" fill="url(#mG)"/><rect x="277.6" y="149.4" width="13.0" height="623.6" fill="#000" opacity="0.22"/><rect x="279.1" y="149.4" width="10.0" height="623.6" fill="url(#mG)"/><rect x="304.6" y="149.4" width="13.0" height="623.6" fill="#000" opacity="0.22"/><rect x="306.1" y="149.4" width="10.0" height="623.6" fill="url(#mG)"/><rect x="331.5" y="149.4" width="13.0" height="623.6" fill="#000" opacity="0.22"/><rect x="333.0" y="149.4" width="10.0" height="623.6" fill="url(#mG)"/><rect x="358.4" y="149.4" width="13.0" height="623.6" fill="#000" opacity="0.22"/><rect x="359.9" y="149.4" width="10.0" height="623.6" fill="url(#mG)"/><rect x="385.3" y="149.4" width="13.0" height="623.6" fill="#000" opacity="0.22"/><rect x="386.8" y="149.4" width="10.0" height="623.6" fill="url(#mG)"/><rect x="412.3" y="149.4" width="13.0" height="623.6" fill="#000" opacity="0.22"/><rect x="413.8" y="149.4" width="10.0" height="623.6" fill="url(#mG)"/><rect x="439.2" y="149.4" width="13.0" height="623.6" fill="#000" opacity="0.22"/><rect x="440.7" y="149.4" width="10.0" height="623.6" fill="url(#mG)"/><rect x="466.1" y="149.4" width="13.0" height="623.6" fill="#000" opacity="0.22"/><rect x="467.6" y="149.4" width="10.0" height="623.6" fill="url(#mG)"/><rect x="493.0" y="149.4" width="13.0" height="623.6" fill="#000" opacity="0.22"/><rect x="494.5" y="149.4" width="10.0" height="623.6" fill="url(#mG)"/><rect x="520.0" y="149.4" width="13.0" height="623.6" fill="#000" opacity="0.22"/><rect x="521.5" y="149.4" width="10.0" height="623.6" fill="url(#mG)"/><rect x="546.9" y="149.4" width="13.0" height="623.6" fill="#000" opacity="0.22"/><rect x="548.4" y="149.4" width="10.0" height="623.6" fill="url(#mG)"/><rect x="573.8" y="149.4" width="13.0" height="623.6" fill="#000" opacity="0.22"/><rect x="575.3" y="149.4" width="10.0" height="623.6" fill="url(#mG)"/><rect x="600.7" y="149.4" width="13.0" height="623.6" fill="#000" opacity="0.22"/><rect x="602.2" y="149.4" width="10.0" height="555.0" fill="url(#mG)"/><rect x="602.2" y="704.4" width="10.0" height="68.6" fill="url(#fG)"/><rect x="627.6" y="149.4" width="13.0" height="623.6" fill="#000" opacity="0.22"/><rect x="629.1" y="149.4" width="10.0" height="587.4" fill="url(#mG)"/><rect x="629.1" y="736.8" width="10.0" height="36.2" fill="url(#fG)"/><rect x="654.6" y="149.4" width="13.0" height="623.6" fill="#000" opacity="0.22"/><rect x="656.1" y="149.4" width="10.0" height="545.6" fill="url(#mG)"/><rect x="656.1" y="695.0" width="10.0" height="78.0" fill="url(#fG)"/><rect x="681.5" y="149.4" width="13.0" height="623.6" fill="#000" opacity="0.22"/><rect x="683.0" y="149.4" width="10.0" height="561.2" fill="url(#mG)"/><rect x="683.0" y="710.6" width="10.0" height="62.4" fill="url(#fG)"/><rect x="708.4" y="149.4" width="13.0" height="623.6" fill="#000" opacity="0.22"/><rect x="709.9" y="149.4" width="10.0" height="536.3" fill="url(#mG)"/><rect x="709.9" y="685.7" width="10.0" height="87.3" fill="url(#fG)"/><rect x="735.3" y="149.4" width="13.0" height="623.6" fill="#000" opacity="0.22"/><rect x="736.8" y="149.4" width="10.0" height="623.6" fill="url(#mG)"/><rect x="762.3" y="149.4" width="13.0" height="623.6" fill="#000" opacity="0.22"/><rect x="763.8" y="149.4" width="10.0" height="623.6" fill="url(#mG)"/><rect x="789.2" y="149.4" width="13.0" height="623.6" fill="#000" opacity="0.22"/><rect x="790.7" y="149.4" width="10.0" height="511.4" fill="url(#mG)"/><rect x="790.7" y="660.8" width="10.0" height="112.2" fill="url(#fG)"/><rect x="816.1" y="149.4" width="13.0" height="623.6" fill="#000" opacity="0.22"/><rect x="817.6" y="149.4" width="10.0" height="586.2" fill="url(#mG)"/><rect x="817.6" y="735.6" width="10.0" height="37.4" fill="url(#fG)"/><rect x="843.0" y="149.4" width="13.0" height="623.6" fill="#000" opacity="0.22"/><rect x="844.5" y="149.4" width="10.0" height="511.4" fill="url(#mG)"/><rect x="844.5" y="660.8" width="10.0" height="112.2" fill="url(#fG)"/><rect x="869.9" y="149.4" width="13.0" height="623.6" fill="#000" opacity="0.22"/><rect x="871.4" y="149.4" width="10.0" height="542.5" fill="url(#mG)"/><rect x="871.4" y="691.9" width="10.0" height="81.1" fill="url(#fG)"/><rect x="896.9" y="149.4" width="13.0" height="623.6" fill="#000" opacity="0.22"/><rect x="898.4" y="149.4" width="10.0" height="498.9" fill="url(#mG)"/><rect x="898.4" y="648.3" width="10.0" height="124.7" fill="url(#fG)"/><rect x="923.8" y="149.4" width="13.0" height="623.6" fill="#000" opacity="0.22"/><rect x="925.3" y="149.4" width="10.0" height="548.8" fill="url(#mG)"/><rect x="925.3" y="698.2" width="10.0" height="74.8" fill="url(#fG)"/><rect x="950.7" y="149.4" width="13.0" height="623.6" fill="#000" opacity="0.22"/><rect x="952.2" y="149.4" width="10.0" height="473.9" fill="url(#mG)"/><rect x="952.2" y="623.3" width="10.0" height="149.7" fill="url(#fG)"/><rect x="977.6" y="149.4" width="13.0" height="623.6" fill="#000" opacity="0.22"/><rect x="979.1" y="149.4" width="10.0" height="582.4" fill="url(#mG)"/><rect x="979.1" y="731.8" width="10.0" height="41.2" fill="url(#fG)"/><rect x="1004.6" y="149.4" width="13.0" height="623.6" fill="#000" opacity="0.22"/><rect x="1006.1" y="149.4" width="10.0" height="558.1" fill="url(#mG)"/><rect x="1006.1" y="707.5" width="10.0" height="65.5" fill="url(#fG)"/><rect x="1031.5" y="149.4" width="13.0" height="623.6" fill="#000" opacity="0.22"/><rect x="1033.0" y="149.4" width="10.0" height="550.0" fill="url(#mG)"/><rect x="1033.0" y="699.4" width="10.0" height="73.6" fill="url(#fG)"/><rect x="1058.4" y="149.4" width="13.0" height="623.6" fill="#000" opacity="0.22"/><rect x="1059.9" y="149.4" width="10.0" height="517.6" fill="url(#mG)"/><rect x="1059.9" y="667.0" width="10.0" height="106.0" fill="url(#fG)"/><rect x="1085.3" y="149.4" width="13.0" height="623.6" fill="#000" opacity="0.22"/><rect x="1086.8" y="149.4" width="10.0" height="536.3" fill="url(#mG)"/><rect x="1086.8" y="685.7" width="10.0" height="87.3" fill="url(#fG)"/><rect x="1112.3" y="149.4" width="13.0" height="623.6" fill="#000" opacity="0.22"/><rect x="1113.8" y="149.4" width="10.0" height="623.6" fill="url(#mG)"/><rect x="1139.2" y="149.4" width="13.0" height="623.6" fill="#000" opacity="0.22"/><rect x="1140.7" y="149.4" width="10.0" height="555.0" fill="url(#mG)"/><rect x="1140.7" y="704.4" width="10.0" height="68.6" fill="url(#fG)"/><rect x="1166.1" y="149.4" width="13.0" height="623.6" fill="#000" opacity="0.22"/><rect x="1167.6" y="149.4" width="10.0" height="498.9" fill="url(#mG)"/><rect x="1167.6" y="648.3" width="10.0" height="124.7" fill="url(#fG)"/><rect x="1193.0" y="149.4" width="13.0" height="623.6" fill="#000" opacity="0.22"/><rect x="1194.5" y="149.4" width="10.0" height="623.6" fill="url(#mG)"/><rect x="1219.9" y="149.4" width="13.0" height="623.6" fill="#000" opacity="0.22"/><rect x="1221.4" y="149.4" width="10.0" height="623.6" fill="url(#mG)"/><rect x="1246.9" y="149.4" width="13.0" height="623.6" fill="#000" opacity="0.22"/><rect x="1248.4" y="149.4" width="10.0" height="311.8" fill="url(#mG)"/><rect x="1248.4" y="461.2" width="10.0" height="311.8" fill="url(#fG)"/><rect x="1273.8" y="149.4" width="13.0" height="623.6" fill="#000" opacity="0.22"/><rect x="1275.3" y="149.4" width="10.0" height="531.3" fill="url(#mG)"/><rect x="1275.3" y="680.7" width="10.0" height="92.3" fill="url(#fG)"/><rect x="1300.7" y="149.4" width="13.0" height="623.6" fill="#000" opacity="0.22"/><rect x="1302.2" y="149.4" width="10.0" height="567.5" fill="url(#mG)"/><rect x="1302.2" y="716.9" width="10.0" height="56.1" fill="url(#fG)"/><rect x="1327.6" y="149.4" width="13.0" height="623.6" fill="#000" opacity="0.22"/><rect x="1329.1" y="149.4" width="10.0" height="567.5" fill="url(#mG)"/><rect x="1329.1" y="716.9" width="10.0" height="56.1" fill="url(#fG)"/><rect x="1354.6" y="149.4" width="13.0" height="623.6" fill="#000" opacity="0.22"/><rect x="1356.1" y="149.4" width="10.0" height="389.1" fill="url(#mG)"/><rect x="1356.1" y="538.5" width="10.0" height="234.5" fill="url(#fG)"/><rect x="1381.5" y="149.4" width="13.0" height="623.6" fill="#000" opacity="0.22"/><rect x="1383.0" y="149.4" width="10.0" height="623.6" fill="url(#mG)"/><rect x="1408.4" y="149.4" width="13.0" height="623.6" fill="#000" opacity="0.22"/><rect x="1409.9" y="149.4" width="10.0" height="498.9" fill="url(#mG)"/><rect x="1409.9" y="648.3" width="10.0" height="124.7" fill="url(#fG)"/><rect x="1435.3" y="149.4" width="13.0" height="623.6" fill="#000" opacity="0.22"/><rect x="1436.8" y="149.4" width="10.0" height="520.1" fill="url(#mG)"/><rect x="1436.8" y="669.5" width="10.0" height="103.5" fill="url(#fG)"/><rect x="1462.3" y="149.4" width="13.0" height="623.6" fill="#000" opacity="0.22"/><rect x="1463.8" y="149.4" width="10.0" height="374.2" fill="url(#mG)"/><rect x="1463.8" y="523.6" width="10.0" height="249.4" fill="url(#fG)"/><rect x="1489.2" y="149.4" width="13.0" height="623.6" fill="#000" opacity="0.22"/><rect x="1490.7" y="149.4" width="10.0" height="623.6" fill="url(#mG)"/><rect x="1516.1" y="149.4" width="13.0" height="623.6" fill="#000" opacity="0.22"/><rect x="1517.6" y="149.4" width="10.0" height="520.1" fill="url(#mG)"/><rect x="1517.6" y="669.5" width="10.0" height="103.5" fill="url(#fG)"/><rect x="1543.0" y="149.4" width="13.0" height="623.6" fill="#000" opacity="0.22"/><rect x="1544.5" y="149.4" width="10.0" height="623.6" fill="url(#mG)"/><rect x="1569.9" y="149.4" width="13.0" height="623.6" fill="#000" opacity="0.22"/><rect x="1571.4" y="149.4" width="10.0" height="417.8" fill="url(#mG)"/><rect x="1571.4" y="567.2" width="10.0" height="205.8" fill="url(#fG)"/><rect x="1596.9" y="149.4" width="13.0" height="623.6" fill="#000" opacity="0.22"/><rect x="1598.4" y="149.4" width="10.0" height="268.1" fill="url(#mG)"/><rect x="1598.4" y="417.5" width="10.0" height="355.5" fill="url(#fG)"/><rect x="1623.8" y="149.4" width="13.0" height="623.6" fill="#000" opacity="0.22"/><rect x="1625.3" y="149.4" width="10.0" height="623.6" fill="url(#mG)"/><rect x="1650.7" y="149.4" width="13.0" height="623.6" fill="#000" opacity="0.22"/><rect x="1652.2" y="149.4" width="10.0" height="436.5" fill="url(#mG)"/><rect x="1652.2" y="585.9" width="10.0" height="187.1" fill="url(#fG)"/><rect x="1677.6" y="149.4" width="13.0" height="623.6" fill="#000" opacity="0.22"/><rect x="1679.1" y="149.4" width="10.0" height="480.2" fill="url(#mG)"/><rect x="1679.1" y="629.6" width="10.0" height="143.4" fill="url(#fG)"/><text x="68.8" y="470.7" font-size="27" fill="#e0e0e0" text-anchor="middle">6</text><text x="95.7" y="408.3" font-size="27" fill="#e0e0e0" text-anchor="middle">4</text><text x="95.7" y="720.1" font-size="27" fill="#ececec" text-anchor="middle">1</text><text x="122.6" y="470.7" font-size="27" fill="#e0e0e0" text-anchor="middle">3</text><text x="149.5" y="470.7" font-size="27" fill="#e0e0e0" text-anchor="middle">11</text><text x="176.5" y="470.7" font-size="27" fill="#e0e0e0" text-anchor="middle">6</text><text x="203.4" y="470.7" font-size="27" fill="#e0e0e0" text-anchor="middle">2</text><text x="230.3" y="470.7" font-size="27" fill="#e0e0e0" text-anchor="middle">4</text><text x="257.2" y="470.7" font-size="27" fill="#e0e0e0" text-anchor="middle">11</text><text x="284.1" y="470.7" font-size="27" fill="#e0e0e0" text-anchor="middle">3</text><text x="311.1" y="470.7" font-size="27" fill="#e0e0e0" text-anchor="middle">7</text><text x="338.0" y="470.7" font-size="27" fill="#e0e0e0" text-anchor="middle">4</text><text x="364.9" y="470.7" font-size="27" fill="#e0e0e0" text-anchor="middle">11</text><text x="391.8" y="470.7" font-size="27" fill="#e0e0e0" text-anchor="middle">3</text><text x="607.2" y="748.2" font-size="27" fill="#ececec" text-anchor="middle">1</text><text x="634.1" y="764.4" font-size="27" fill="#ececec" text-anchor="middle">1</text><text x="661.1" y="743.5" font-size="27" fill="#ececec" text-anchor="middle">3</text><text x="688.0" y="751.3" font-size="27" fill="#ececec" text-anchor="middle">4</text><text x="714.9" y="738.8" font-size="27" fill="#ececec" text-anchor="middle">1</text><text x="795.7" y="726.4" font-size="27" fill="#ececec" text-anchor="middle">2</text><text x="822.6" y="763.8" font-size="27" fill="#ececec" text-anchor="middle">1</text><text x="849.5" y="726.4" font-size="27" fill="#ececec" text-anchor="middle">4</text><text x="876.4" y="742.0" font-size="27" fill="#ececec" text-anchor="middle">3</text><text x="903.4" y="720.1" font-size="27" fill="#ececec" text-anchor="middle">4</text><text x="930.3" y="745.1" font-size="27" fill="#ececec" text-anchor="middle">2</text><text x="957.2" y="707.7" font-size="27" fill="#ececec" text-anchor="middle">2</text><text x="984.1" y="761.9" font-size="27" fill="#ececec" text-anchor="middle">1</text><text x="1011.1" y="749.8" font-size="27" fill="#ececec" text-anchor="middle">2</text><text x="1038.0" y="745.7" font-size="27" fill="#ececec" text-anchor="middle">2</text><text x="1064.9" y="729.5" font-size="27" fill="#ececec" text-anchor="middle">1</text><text x="1091.8" y="738.8" font-size="27" fill="#ececec" text-anchor="middle">1</text><text x="1145.7" y="748.2" font-size="27" fill="#ececec" text-anchor="middle">2</text><text x="1172.6" y="720.1" font-size="27" fill="#ececec" text-anchor="middle">1</text><text x="1253.4" y="626.6" font-size="27" fill="#ececec" text-anchor="middle">2</text><text x="1280.3" y="736.4" font-size="27" fill="#ececec" text-anchor="middle">2</text><text x="1307.2" y="754.4" font-size="27" fill="#ececec" text-anchor="middle">2</text><text x="1334.1" y="754.4" font-size="27" fill="#ececec" text-anchor="middle">2</text><text x="1361.1" y="665.3" font-size="27" fill="#ececec" text-anchor="middle">2</text><text x="1414.9" y="408.3" font-size="27" fill="#e0e0e0" text-anchor="middle">4</text><text x="1414.9" y="720.1" font-size="27" fill="#ececec" text-anchor="middle">1</text><text x="1441.8" y="418.9" font-size="27" fill="#e0e0e0" text-anchor="middle">5</text><text x="1441.8" y="730.7" font-size="27" fill="#ececec" text-anchor="middle">1</text><text x="1468.8" y="346.0" font-size="27" fill="#e0e0e0" text-anchor="middle">3</text><text x="1468.8" y="657.8" font-size="27" fill="#ececec" text-anchor="middle">2</text><text x="1495.7" y="470.7" font-size="27" fill="#e0e0e0" text-anchor="middle">5</text><text x="1522.6" y="418.9" font-size="27" fill="#e0e0e0" text-anchor="middle">5</text><text x="1522.6" y="730.7" font-size="27" fill="#ececec" text-anchor="middle">1</text><text x="1549.5" y="470.7" font-size="27" fill="#e0e0e0" text-anchor="middle">4</text><text x="1576.4" y="367.8" font-size="27" fill="#e0e0e0" text-anchor="middle">4</text><text x="1576.4" y="679.6" font-size="27" fill="#ececec" text-anchor="middle">2</text><text x="1603.4" y="293.0" font-size="27" fill="#e0e0e0" text-anchor="middle">3</text><text x="1603.4" y="604.8" font-size="27" fill="#ececec" text-anchor="middle">4</text><text x="1630.3" y="470.7" font-size="27" fill="#e0e0e0" text-anchor="middle">3</text><text x="1657.2" y="377.2" font-size="27" fill="#e0e0e0" text-anchor="middle">14</text><text x="1657.2" y="689.0" font-size="27" fill="#ececec" text-anchor="middle">6</text><text x="1684.1" y="399.0" font-size="27" fill="#e0e0e0" text-anchor="middle">24</text><text x="1684.1" y="710.8" font-size="27" fill="#ececec" text-anchor="middle">7</text><line x1="55.3" y1="773.0" x2="1697.6" y2="773.0" stroke="#a6a6a6" stroke-width="2.6"/><line x1="55.3" y1="773.0" x2="55.3" y2="783.0" stroke="#a6a6a6" stroke-width="2.2"/><line x1="82.2" y1="773.0" x2="82.2" y2="783.0" stroke="#a6a6a6" stroke-width="2.2"/><line x1="109.1" y1="773.0" x2="109.1" y2="783.0" stroke="#a6a6a6" stroke-width="2.2"/><line x1="136.1" y1="773.0" x2="136.1" y2="783.0" stroke="#a6a6a6" stroke-width="2.2"/><line x1="163.0" y1="773.0" x2="163.0" y2="783.0" stroke="#a6a6a6" stroke-width="2.2"/><line x1="189.9" y1="773.0" x2="189.9" y2="783.0" stroke="#a6a6a6" stroke-width="2.2"/><line x1="216.8" y1="773.0" x2="216.8" y2="783.0" stroke="#a6a6a6" stroke-width="2.2"/><line x1="243.8" y1="773.0" x2="243.8" y2="783.0" stroke="#a6a6a6" stroke-width="2.2"/><line x1="270.7" y1="773.0" x2="270.7" y2="783.0" stroke="#a6a6a6" stroke-width="2.2"/><line x1="297.6" y1="773.0" x2="297.6" y2="783.0" stroke="#a6a6a6" stroke-width="2.2"/><line x1="324.5" y1="773.0" x2="324.5" y2="783.0" stroke="#a6a6a6" stroke-width="2.2"/><line x1="351.5" y1="773.0" x2="351.5" y2="783.0" stroke="#a6a6a6" stroke-width="2.2"/><line x1="378.4" y1="773.0" x2="378.4" y2="783.0" stroke="#a6a6a6" stroke-width="2.2"/><line x1="405.3" y1="773.0" x2="405.3" y2="783.0" stroke="#a6a6a6" stroke-width="2.2"/><line x1="432.2" y1="773.0" x2="432.2" y2="783.0" stroke="#a6a6a6" stroke-width="2.2"/><line x1="459.1" y1="773.0" x2="459.1" y2="783.0" stroke="#a6a6a6" stroke-width="2.2"/><line x1="486.1" y1="773.0" x2="486.1" y2="783.0" stroke="#a6a6a6" stroke-width="2.2"/><line x1="513.0" y1="773.0" x2="513.0" y2="783.0" stroke="#a6a6a6" stroke-width="2.2"/><line x1="539.9" y1="773.0" x2="539.9" y2="783.0" stroke="#a6a6a6" stroke-width="2.2"/><line x1="566.8" y1="773.0" x2="566.8" y2="783.0" stroke="#a6a6a6" stroke-width="2.2"/><line x1="593.8" y1="773.0" x2="593.8" y2="783.0" stroke="#a6a6a6" stroke-width="2.2"/><line x1="620.7" y1="773.0" x2="620.7" y2="783.0" stroke="#a6a6a6" stroke-width="2.2"/><line x1="647.6" y1="773.0" x2="647.6" y2="783.0" stroke="#a6a6a6" stroke-width="2.2"/><line x1="674.5" y1="773.0" x2="674.5" y2="783.0" stroke="#a6a6a6" stroke-width="2.2"/><line x1="701.5" y1="773.0" x2="701.5" y2="783.0" stroke="#a6a6a6" stroke-width="2.2"/><line x1="728.4" y1="773.0" x2="728.4" y2="783.0" stroke="#a6a6a6" stroke-width="2.2"/><line x1="755.3" y1="773.0" x2="755.3" y2="783.0" stroke="#a6a6a6" stroke-width="2.2"/><line x1="782.2" y1="773.0" x2="782.2" y2="783.0" stroke="#a6a6a6" stroke-width="2.2"/><line x1="809.1" y1="773.0" x2="809.1" y2="783.0" stroke="#a6a6a6" stroke-width="2.2"/><line x1="836.1" y1="773.0" x2="836.1" y2="783.0" stroke="#a6a6a6" stroke-width="2.2"/><line x1="863.0" y1="773.0" x2="863.0" y2="783.0" stroke="#a6a6a6" stroke-width="2.2"/><line x1="889.9" y1="773.0" x2="889.9" y2="783.0" stroke="#a6a6a6" stroke-width="2.2"/><line x1="916.8" y1="773.0" x2="916.8" y2="783.0" stroke="#a6a6a6" stroke-width="2.2"/><line x1="943.8" y1="773.0" x2="943.8" y2="783.0" stroke="#a6a6a6" stroke-width="2.2"/><line x1="970.7" y1="773.0" x2="970.7" y2="783.0" stroke="#a6a6a6" stroke-width="2.2"/><line x1="997.6" y1="773.0" x2="997.6" y2="783.0" stroke="#a6a6a6" stroke-width="2.2"/><line x1="1024.5" y1="773.0" x2="1024.5" y2="783.0" stroke="#a6a6a6" stroke-width="2.2"/><line x1="1051.4" y1="773.0" x2="1051.4" y2="783.0" stroke="#a6a6a6" stroke-width="2.2"/><line x1="1078.4" y1="773.0" x2="1078.4" y2="783.0" stroke="#a6a6a6" stroke-width="2.2"/><line x1="1105.3" y1="773.0" x2="1105.3" y2="783.0" stroke="#a6a6a6" stroke-width="2.2"/><line x1="1132.2" y1="773.0" x2="1132.2" y2="783.0" stroke="#a6a6a6" stroke-width="2.2"/><line x1="1159.1" y1="773.0" x2="1159.1" y2="783.0" stroke="#a6a6a6" stroke-width="2.2"/><line x1="1186.1" y1="773.0" x2="1186.1" y2="783.0" stroke="#a6a6a6" stroke-width="2.2"/><line x1="1213.0" y1="773.0" x2="1213.0" y2="783.0" stroke="#a6a6a6" stroke-width="2.2"/><line x1="1239.9" y1="773.0" x2="1239.9" y2="783.0" stroke="#a6a6a6" stroke-width="2.2"/><line x1="1266.8" y1="773.0" x2="1266.8" y2="783.0" stroke="#a6a6a6" stroke-width="2.2"/><line x1="1293.8" y1="773.0" x2="1293.8" y2="783.0" stroke="#a6a6a6" stroke-width="2.2"/><line x1="1320.7" y1="773.0" x2="1320.7" y2="783.0" stroke="#a6a6a6" stroke-width="2.2"/><line x1="1347.6" y1="773.0" x2="1347.6" y2="783.0" stroke="#a6a6a6" stroke-width="2.2"/><line x1="1374.5" y1="773.0" x2="1374.5" y2="783.0" stroke="#a6a6a6" stroke-width="2.2"/><line x1="1401.4" y1="773.0" x2="1401.4" y2="783.0" stroke="#a6a6a6" stroke-width="2.2"/><line x1="1428.4" y1="773.0" x2="1428.4" y2="783.0" stroke="#a6a6a6" stroke-width="2.2"/><line x1="1455.3" y1="773.0" x2="1455.3" y2="783.0" stroke="#a6a6a6" stroke-width="2.2"/><line x1="1482.2" y1="773.0" x2="1482.2" y2="783.0" stroke="#a6a6a6" stroke-width="2.2"/><line x1="1509.1" y1="773.0" x2="1509.1" y2="783.0" stroke="#a6a6a6" stroke-width="2.2"/><line x1="1536.1" y1="773.0" x2="1536.1" y2="783.0" stroke="#a6a6a6" stroke-width="2.2"/><line x1="1563.0" y1="773.0" x2="1563.0" y2="783.0" stroke="#a6a6a6" stroke-width="2.2"/><line x1="1589.9" y1="773.0" x2="1589.9" y2="783.0" stroke="#a6a6a6" stroke-width="2.2"/><line x1="1616.8" y1="773.0" x2="1616.8" y2="783.0" stroke="#a6a6a6" stroke-width="2.2"/><line x1="1643.8" y1="773.0" x2="1643.8" y2="783.0" stroke="#a6a6a6" stroke-width="2.2"/><line x1="1670.7" y1="773.0" x2="1670.7" y2="783.0" stroke="#a6a6a6" stroke-width="2.2"/><line x1="1697.6" y1="773.0" x2="1697.6" y2="783.0" stroke="#a6a6a6" stroke-width="2.2"/><text x="76.3" y="816.5" font-size="25.5" fill="#d9d9d9" text-anchor="end" transform="rotate(-45 76.3 816.5)">1961</text><text x="130.1" y="816.5" font-size="25.5" fill="#d9d9d9" text-anchor="end" transform="rotate(-45 130.1 816.5)">1963</text><text x="184.0" y="816.5" font-size="25.5" fill="#d9d9d9" text-anchor="end" transform="rotate(-45 184.0 816.5)">1965</text><text x="237.8" y="816.5" font-size="25.5" fill="#d9d9d9" text-anchor="end" transform="rotate(-45 237.8 816.5)">1967</text><text x="291.6" y="816.5" font-size="25.5" fill="#d9d9d9" text-anchor="end" transform="rotate(-45 291.6 816.5)">1969</text><text x="345.5" y="816.5" font-size="25.5" fill="#d9d9d9" text-anchor="end" transform="rotate(-45 345.5 816.5)">1971</text><text x="399.3" y="816.5" font-size="25.5" fill="#d9d9d9" text-anchor="end" transform="rotate(-45 399.3 816.5)">1973</text><text x="453.2" y="816.5" font-size="25.5" fill="#d9d9d9" text-anchor="end" transform="rotate(-45 453.2 816.5)">1975</text><text x="507.0" y="816.5" font-size="25.5" fill="#d9d9d9" text-anchor="end" transform="rotate(-45 507.0 816.5)">1977</text><text x="560.9" y="816.5" font-size="25.5" fill="#d9d9d9" text-anchor="end" transform="rotate(-45 560.9 816.5)">1979</text><text x="614.7" y="816.5" font-size="25.5" fill="#d9d9d9" text-anchor="end" transform="rotate(-45 614.7 816.5)">1981</text><text x="668.6" y="816.5" font-size="25.5" fill="#d9d9d9" text-anchor="end" transform="rotate(-45 668.6 816.5)">1983</text><text x="722.4" y="816.5" font-size="25.5" fill="#d9d9d9" text-anchor="end" transform="rotate(-45 722.4 816.5)">1985</text><text x="776.3" y="816.5" font-size="25.5" fill="#d9d9d9" text-anchor="end" transform="rotate(-45 776.3 816.5)">1987</text><text x="830.1" y="816.5" font-size="25.5" fill="#d9d9d9" text-anchor="end" transform="rotate(-45 830.1 816.5)">1989</text><text x="883.9" y="816.5" font-size="25.5" fill="#d9d9d9" text-anchor="end" transform="rotate(-45 883.9 816.5)">1991</text><text x="937.8" y="816.5" font-size="25.5" fill="#d9d9d9" text-anchor="end" transform="rotate(-45 937.8 816.5)">1993</text><text x="991.6" y="816.5" font-size="25.5" fill="#d9d9d9" text-anchor="end" transform="rotate(-45 991.6 816.5)">1995</text><text x="1045.5" y="816.5" font-size="25.5" fill="#d9d9d9" text-anchor="end" transform="rotate(-45 1045.5 816.5)">1997</text><text x="1099.3" y="816.5" font-size="25.5" fill="#d9d9d9" text-anchor="end" transform="rotate(-45 1099.3 816.5)">1999</text><text x="1153.2" y="816.5" font-size="25.5" fill="#d9d9d9" text-anchor="end" transform="rotate(-45 1153.2 816.5)">2001</text><text x="1207.0" y="816.5" font-size="25.5" fill="#d9d9d9" text-anchor="end" transform="rotate(-45 1207.0 816.5)">2003</text><text x="1260.9" y="816.5" font-size="25.5" fill="#d9d9d9" text-anchor="end" transform="rotate(-45 1260.9 816.5)">2005</text><text x="1314.7" y="816.5" font-size="25.5" fill="#d9d9d9" text-anchor="end" transform="rotate(-45 1314.7 816.5)">2007</text><text x="1368.6" y="816.5" font-size="25.5" fill="#d9d9d9" text-anchor="end" transform="rotate(-45 1368.6 816.5)">2009</text><text x="1422.4" y="816.5" font-size="25.5" fill="#d9d9d9" text-anchor="end" transform="rotate(-45 1422.4 816.5)">2011</text><text x="1476.3" y="816.5" font-size="25.5" fill="#d9d9d9" text-anchor="end" transform="rotate(-45 1476.3 816.5)">2013</text><text x="1530.1" y="816.5" font-size="25.5" fill="#d9d9d9" text-anchor="end" transform="rotate(-45 1530.1 816.5)">2015</text><text x="1583.9" y="816.5" font-size="25.5" fill="#d9d9d9" text-anchor="end" transform="rotate(-45 1583.9 816.5)">2017</text><text x="1637.8" y="816.5" font-size="25.5" fill="#d9d9d9" text-anchor="end" transform="rotate(-45 1637.8 816.5)">2019</text><text x="1691.6" y="816.5" font-size="25.5" fill="#d9d9d9" text-anchor="end" transform="rotate(-45 1691.6 816.5)">2021</text><rect x="832.6" y="950.0" width="16.7" height="16" fill="url(#fG)"/><text x="856.6" y="966.5" font-size="27" fill="#d9d9d9">F</text><rect x="886.6" y="950.0" width="16.6" height="16" fill="url(#mG)"/><text x="909.1" y="966.5" font-size="27" fill="#d9d9d9">M</text><rect x="389.9" y="207.3" width="1029.7" height="502.9" fill="#fff" stroke="#d4d4d4" stroke-width="2.4"/><line x1="483.6" y1="570.3" x2="1359.0" y2="570.3" stroke="#d9d9d9" stroke-width="2.6"/><text x="455.0" y="579.8" font-size="26.5" fill="#595959" text-anchor="end">0%</text><line x1="483.6" y1="517.0" x2="1359.0" y2="517.0" stroke="#d9d9d9" stroke-width="2.6"/><text x="455.0" y="526.5" font-size="26.5" fill="#595959" text-anchor="end">10%</text><line x1="483.6" y1="463.7" x2="1359.0" y2="463.7" stroke="#d9d9d9" stroke-width="2.6"/><text x="455.0" y="473.2" font-size="26.5" fill="#595959" text-anchor="end">20%</text><line x1="483.6" y1="410.4" x2="1359.0" y2="410.4" stroke="#d9d9d9" stroke-width="2.6"/><text x="455.0" y="419.9" font-size="26.5" fill="#595959" text-anchor="end">30%</text><line x1="483.6" y1="357.2" x2="1359.0" y2="357.2" stroke="#d9d9d9" stroke-width="2.6"/><text x="455.0" y="366.7" font-size="26.5" fill="#595959" text-anchor="end">40%</text><line x1="483.6" y1="303.9" x2="1359.0" y2="303.9" stroke="#d9d9d9" stroke-width="2.6"/><text x="455.0" y="313.4" font-size="26.5" fill="#595959" text-anchor="end">50%</text><line x1="483.6" y1="250.6" x2="1359.0" y2="250.6" stroke="#d9d9d9" stroke-width="2.6"/><text x="455.0" y="260.1" font-size="26.5" fill="#595959" text-anchor="end">60%</text><text x="903.6" y="277.3" font-size="40.5" fill="#595959" text-anchor="middle">Chart Title</text><text x="497.2" y="590.0" font-size="26" fill="#595959" text-anchor="end" transform="rotate(-90 497.2 590.0)">1961</text><text x="541.0" y="590.0" font-size="26" fill="#595959" text-anchor="end" transform="rotate(-90 541.0 590.0)">1968</text><text x="584.8" y="590.0" font-size="26" fill="#595959" text-anchor="end" transform="rotate(-90 584.8 590.0)">1975</text><text x="628.5" y="590.0" font-size="26" fill="#595959" text-anchor="end" transform="rotate(-90 628.5 590.0)">1982</text><text x="672.3" y="590.0" font-size="26" fill="#595959" text-anchor="end" transform="rotate(-90 672.3 590.0)">1989</text><text x="716.1" y="590.0" font-size="26" fill="#595959" text-anchor="end" transform="rotate(-90 716.1 590.0)">1996</text><text x="759.8" y="590.0" font-size="26" fill="#595959" text-anchor="end" transform="rotate(-90 759.8 590.0)">2003</text><text x="803.6" y="590.0" font-size="26" fill="#595959" text-anchor="end" transform="rotate(-90 803.6 590.0)">2010</text><text x="847.4" y="590.0" font-size="26" fill="#595959" text-anchor="end" transform="rotate(-90 847.4 590.0)">2017</text><text x="891.2" y="590.0" font-size="26" fill="#595959" text-anchor="end" transform="rotate(-90 891.2 590.0)">2024</text><text x="934.9" y="590.0" font-size="26" fill="#595959" text-anchor="end" transform="rotate(-90 934.9 590.0)">2031</text><text x="978.7" y="590.0" font-size="26" fill="#595959" text-anchor="end" transform="rotate(-90 978.7 590.0)">2038</text><text x="1022.5" y="590.0" font-size="26" fill="#595959" text-anchor="end" transform="rotate(-90 1022.5 590.0)">2045</text><text x="1066.2" y="590.0" font-size="26" fill="#595959" text-anchor="end" transform="rotate(-90 1066.2 590.0)">2052</text><text x="1110.0" y="590.0" font-size="26" fill="#595959" text-anchor="end" transform="rotate(-90 1110.0 590.0)">2059</text><text x="1153.8" y="590.0" font-size="26" fill="#595959" text-anchor="end" transform="rotate(-90 1153.8 590.0)">2066</text><text x="1197.5" y="590.0" font-size="26" fill="#595959" text-anchor="end" transform="rotate(-90 1197.5 590.0)">2073</text><text x="1241.3" y="590.0" font-size="26" fill="#595959" text-anchor="end" transform="rotate(-90 1241.3 590.0)">2080</text><text x="1285.1" y="590.0" font-size="26" fill="#595959" text-anchor="end" transform="rotate(-90 1285.1 590.0)">2087</text><text x="1328.9" y="590.0" font-size="26" fill="#595959" text-anchor="end" transform="rotate(-90 1328.9 590.0)">2094</text><polyline points="486.7,570.3 493.0,570.3 499.2,463.7 505.5,570.3 511.7,570.3 518.0,570.3 524.2,570.3 530.5,570.3 536.7,570.3 543.0,570.3 549.3,570.3 555.5,570.3 561.8,570.3 568.0,570.3 574.3,570.3 580.5,570.3 586.8,570.3 593.0,570.3 599.3,570.3 605.5,570.3 611.8,570.3 618.0,511.7 624.3,539.4 630.5,503.7 636.8,517.0 643.0,495.7 649.3,570.3 655.6,570.3 661.8,474.4 668.1,538.3 674.3,474.4 680.6,501.0 686.8,463.7 693.1,506.4 699.3,442.4 705.6,535.1 711.8,514.4 718.1,507.4 724.3,479.7 730.6,495.7 736.8,570.3 743.1,511.7 749.3,463.7 755.6,570.3 761.9,570.3 768.1,303.9 774.4,491.4 780.6,522.3 786.9,522.3 793.1,370.0 799.4,570.3 805.6,463.7 811.9,481.8 818.1,357.2 824.4,570.3 830.6,481.8 836.9,570.3 843.1,405.1 849.4,266.6 855.6,570.3 861.9,410.4 868.2,447.7" fill="none" stroke="#ec14cc" stroke-width="8" stroke-linejoin="round" stroke-linecap="butt"/><polyline points="486.7,564.9 493.0,564.5 499.2,564.0 505.5,563.4 511.7,562.8 518.0,562.1 524.2,561.4 530.5,560.7 536.7,559.8 543.0,559.0 549.3,558.0 555.5,557.0 561.8,555.9 568.0,554.7 574.3,553.4 580.5,552.1 586.8,550.7 593.0,549.1 599.3,547.5 605.5,545.8 611.8,544.0 618.0,542.1 624.3,540.1 630.5,538.0 636.8,535.8 643.0,533.5 649.3,531.1 655.6,528.7 661.8,526.2 668.1,523.6 674.3,520.9 680.6,518.2 686.8,515.4 693.1,512.6 699.3,509.8 705.6,507.0 711.8,504.2 718.1,501.4 724.3,498.6 730.6,495.8 736.8,493.1 743.1,490.4 749.3,487.8 755.6,485.3 761.9,482.8 768.1,480.5 774.4,478.2 780.6,476.0 786.9,473.9 793.1,471.9 799.4,470.0 805.6,468.1 811.9,466.4 818.1,464.8 824.4,463.3 830.6,461.8 836.9,460.5 843.1,459.2 849.4,458.0 855.6,456.9 861.9,455.9 868.2,454.9 874.4,454.0 880.7,453.2 886.9,452.4 893.2,451.7 899.4,451.0 905.7,450.4 911.9,449.9 918.2,449.4 924.4,448.9 930.7,448.4 936.9,448.0 943.2,447.7 949.4,447.3 955.7,447.0 961.9,446.7 968.2,446.4 974.4,446.2 980.7,446.0 987.0,445.8 993.2,445.6 999.5,445.4 1005.7,445.2 1012.0,445.1 1018.2,444.9 1024.5,444.8 1030.7,444.7 1037.0,444.6 1043.2,444.5 1049.5,444.4 1055.7,444.3 1062.0,444.3 1068.2,444.2 1074.5,444.1 1080.7,444.1 1087.0,444.0 1093.3,444.0 1099.5,443.9 1105.8,443.9 1112.0,443.9 1118.3,443.8 1124.5,443.8 1130.8,443.8 1137.0,443.8 1143.3,443.7 1149.5,443.7 1155.8,443.7 1162.0,443.7 1168.3,443.7 1174.5,443.6 1180.8,443.6 1187.0,443.6 1193.3,443.6 1199.6,443.6 1205.8,443.6 1212.1,443.6 1218.3,443.6 1224.6,443.6 1230.8,443.6 1237.1,443.6 1243.3,443.5 1249.6,443.5 1255.8,443.5 1262.1,443.5 1268.3,443.5 1274.6,443.5 1280.8,443.5 1287.1,443.5 1293.3,443.5 1299.6,443.5 1305.9,443.5 1312.1,443.5 1318.4,443.5 1324.6,443.5 1330.9,443.5 1337.1,443.5 1343.4,443.5 1349.6,443.5 1355.9,443.5" fill="none" stroke="#3412c4" stroke-width="8.5" stroke-linejoin="round" stroke-linecap="round"/></svg>
<div class="r" style="left:0.0px;top:1930.0px;width:3840.0px;height:50.0px;background:#e6e6e6;"></div>
<div class="r" style="left:0.0px;top:1980.0px;width:3840.0px;height:1.2px;background:#c6c6c6;"></div>
<div class="r" style="left:803.0px;top:1929.3px;width:217.7px;height:47.0px;background:#ffffff;"></div>
<div class="r" style="left:803.0px;top:1973.5px;width:217.7px;height:3.0px;background:#217346;"></div>
<svg style="position:absolute;left:0.0px;top:0.0px;" width="3840.0" height="2160.0" viewBox="0 0 3840.0 2160.0"><path d="M46.2 1944.4 L35.9 1954.1 L46.2 1963.8 Z" fill="#1e6b3e"/><path d="M88 1944.4 L98.3 1954.1 L88 1963.8 Z" fill="#bdbdbd"/><rect x="131.0" y="1959" width="5.3" height="5" fill="#1e6b3e"/><rect x="140.9" y="1959" width="5.3" height="5" fill="#1e6b3e"/><rect x="150.8" y="1959" width="5.3" height="5" fill="#1e6b3e"/><line x1="169.5" y1="1933" x2="169.5" y2="1976" stroke="#a6a6a6" stroke-width="1.3"/><line x1="308.6" y1="1933" x2="308.6" y2="1976" stroke="#a6a6a6" stroke-width="1.3"/><line x1="480.4" y1="1933" x2="480.4" y2="1976" stroke="#a6a6a6" stroke-width="1.3"/><line x1="612.0" y1="1933" x2="612.0" y2="1976" stroke="#a6a6a6" stroke-width="1.3"/><line x1="1151.4" y1="1933" x2="1151.4" y2="1976" stroke="#a6a6a6" stroke-width="1.3"/><line x1="1283.0" y1="1933" x2="1283.0" y2="1976" stroke="#a6a6a6" stroke-width="1.3"/><line x1="1461.0" y1="1933" x2="1461.0" y2="1976" stroke="#a6a6a6" stroke-width="1.3"/><line x1="803" y1="1929.3" x2="803" y2="1976" stroke="#bdbdbd" stroke-width="1.2"/><line x1="1020.7" y1="1929.3" x2="1020.7" y2="1976" stroke="#bdbdbd" stroke-width="1.2"/><circle cx="1538.2" cy="1955.4" r="18" fill="none" stroke="#6a6a6a" stroke-width="3.2"/><path d="M1538.2 1945.5 L1538.2 1965.3 M1528.3 1955.4 L1548.1 1955.4" stroke="#6a6a6a" stroke-width="4.6"/><rect x="2297.5" y="1941.0" width="4" height="4" fill="#999"/><rect x="2297.5" y="1950.0" width="4" height="4" fill="#999"/><rect x="2297.5" y="1959.0" width="4" height="4" fill="#999"/><rect x="2328" y="1934" width="1465" height="40.6" fill="#dadada"/><rect x="2328.5" y="1934.5" width="40" height="40" fill="#fff" stroke="#ababab" stroke-width="1"/><path d="M2353 1945 L2343.5 1954.5 L2353 1964 Z" fill="#777"/><rect x="2523" y="1934.5" width="971.7" height="40" fill="#fff" stroke="#ababab" stroke-width="1"/><rect x="3752" y="1934.5" width="40.5" height="40" fill="#fff" stroke="#ababab" stroke-width="1"/><path d="M3767 1945 L3776.5 1954.5 L3767 1964 Z" fill="#777"/></svg>
<div class="t" style="top:1934.4px;font-size:32.50px;line-height:36.30px;color:#444;left:-761.5px;width:2000px;text-align:center;">Male %</div>
<div class="t" style="top:1934.4px;font-size:32.50px;line-height:36.30px;color:#444;left:-606.0px;width:2000px;text-align:center;">Overall %</div>
<div class="t" style="top:1934.4px;font-size:32.50px;line-height:36.30px;color:#444;left:-455.5px;width:2000px;text-align:center;">Sheet1</div>
<div class="t" style="top:1934.4px;font-size:32.50px;line-height:36.30px;color:#444;left:-293.7px;width:2000px;text-align:center;">Proportion</div>
<div class="t" style="top:1934.4px;font-size:32.50px;line-height:36.30px;color:#444;left:84.5px;width:2000px;text-align:center;">Sheet3</div>
<div class="t" style="top:1934.4px;font-size:32.50px;line-height:36.30px;color:#444;left:215.5px;width:2000px;text-align:center;">Sheet2</div>
<div class="t" style="top:1934.4px;font-size:32.50px;line-height:36.30px;color:#444;left:372.0px;width:2000px;text-align:center;">buffertest</div>
<div class="t" style="top:1933.8px;font-size:33.40px;line-height:37.31px;color:#217346;font-weight:bold;left:-88.8px;width:2000px;text-align:center;">2022-Amber</div>
<div class="r" style="left:0.0px;top:1981.2px;width:3840.0px;height:79.0px;background:#f0f0f0;"></div>
<div class="t" style="top:2007.4px;font-size:25.50px;line-height:28.48px;color:#444;left:14.0px;">Ready</div>
<svg style="position:absolute;left:0.0px;top:0.0px;" width="3840.0" height="2160.0" viewBox="0 0 3840.0 2160.0"><rect x="3187" y="1981.2" width="76" height="79" fill="#c6c6c6"/><rect x="3209.5" y="2005.5" width="30" height="30" fill="none" stroke="#777" stroke-width="1.2"/><line x1="3219.5" y1="2005.5" x2="3219.5" y2="2035.5" stroke="#777" stroke-width="1.1"/><line x1="3209.5" y1="2015.5" x2="3239.5" y2="2015.5" stroke="#777" stroke-width="1.1"/><line x1="3229.5" y1="2005.5" x2="3229.5" y2="2035.5" stroke="#777" stroke-width="1.1"/><line x1="3209.5" y1="2025.5" x2="3239.5" y2="2025.5" stroke="#777" stroke-width="1.1"/><rect x="3284" y="2005" width="33" height="29.5" fill="none" stroke="#777" stroke-width="1.2"/><rect x="3292" y="2010" width="17" height="20" fill="none" stroke="#666" stroke-width="1.3"/><line x1="3295" y1="2014.0" x2="3306" y2="2014.0" stroke="#666" stroke-width="1.2"/><line x1="3295" y1="2018.0" x2="3306" y2="2018.0" stroke="#666" stroke-width="1.2"/><line x1="3295" y1="2022.0" x2="3306" y2="2022.0" stroke="#666" stroke-width="1.2"/><line x1="3295" y1="2026.0" x2="3306" y2="2026.0" stroke="#666" stroke-width="1.2"/><rect x="3359" y="2004.5" width="33" height="30.5" fill="none" stroke="#777" stroke-width="1.2"/><path d="M3358.5 2023 L3379.6 2023 L3379.6 2005 M3369.6 2005 L3369.6 2023" fill="none" stroke="#666" stroke-width="1.2"/><rect x="3426" y="2018.5" width="17" height="4" fill="#666"/><line x1="3451" y1="2020.5" x2="3699" y2="2020.5" stroke="#999" stroke-width="1.6"/><rect x="3569" y="2006" width="11" height="29" fill="#666"/><path d="M3711 2020 L3731 2020 M3721 2010 L3721 2030" stroke="#666" stroke-width="3.6"/></svg>
<div class="t" style="top:2008.0px;font-size:26.50px;line-height:29.60px;color:#444;right:14.0px;text-align:right;">100%</div>
<svg style="position:absolute;left:0.0px;top:0.0px;" width="3840.0" height="2160.0" viewBox="0 0 3840.0 2160.0"><linearGradient id="tbG2" gradientUnits="userSpaceOnUse" x1="1700" y1="0" x2="3840" y2="0"><stop offset="0" stop-color="#3a2627"/><stop offset="0.2" stop-color="#2d2122"/><stop offset="0.45" stop-color="#3b2226"/><stop offset="0.68" stop-color="#2b1e20"/><stop offset="0.85" stop-color="#3d2328"/><stop offset="1" stop-color="#40252a"/></linearGradient><linearGradient id="xlG" gradientUnits="userSpaceOnUse" x1="1588" y1="0" x2="1698" y2="0"><stop offset="0" stop-color="#4b4b4b"/><stop offset="1" stop-color="#5f4d4b"/></linearGradient></defs><rect x="0" y="2060" width="3840" height="100" fill="#1c1c1c"/><rect x="1709" y="2060" width="2131" height="100" fill="url(#tbG2)"/><rect x="1588" y="2060" width="110.3" height="100" fill="url(#xlG)"/><rect x="1698.3" y="2060" width="10.7" height="100" fill="#3c3333"/><rect x="122" y="2060" width="716" height="100" fill="#fff"/><rect x="121" y="2060" width="717" height="3" fill="#c8c8c8"/><rect x="120" y="2060" width="3" height="100" fill="#bdbdbd"/><rect x="835" y="2060" width="3" height="100" fill="#bdbdbd"/><rect x="120" y="2157" width="718" height="3" fill="#bdbdbd"/><path d="M39.6 2094.6 L56 2092.3 L56 2108.4 L39.6 2108.4 Z M57.5 2092 L80.3 2089.8 L80.3 2108.4 L57.5 2108.4 Z M39.6 2109.9 L56 2109.9 L56 2127.5 L39.6 2125.2 Z M57.5 2109.9 L80.3 2109.9 L80.3 2130.3 L57.5 2127.8 Z" fill="#fff"/><circle cx="183.3" cy="2102" r="14.3" fill="none" stroke="#111" stroke-width="3"/><line x1="173" y1="2113.5" x2="153" y2="2132.5" stroke="#111" stroke-width="3.2" stroke-linecap="round"/><path d="M880 2091 L880 2096 L908 2096 L908 2091 M880 2129 L880 2124 L908 2124 L908 2129" fill="none" stroke="#fff" stroke-width="2.4"/><rect x="881.2" y="2101.5" width="25.6" height="17" fill="none" stroke="#fff" stroke-width="2.4"/><line x1="916.8" y1="2091" x2="916.8" y2="2129" stroke="#fff" stroke-width="2.2"/><circle cx="916.8" cy="2106" r="3.5" fill="#fff"/><path d="M1001.6 2094 L1001.6 2091 Q1001.6 2088 1004.6 2088 L1021 2088 L1026 2092.5 L1051 2092.5 Q1053.8 2092.5 1053.8 2095.5 L1053.8 2129 Q1053.8 2131.7 1051 2131.7 L1004.6 2131.7 Q1001.6 2131.7 1001.6 2129 Z" fill="#fcd462"/><path d="M1001.6 2097 L1001.6 2091 Q1001.6 2088 1004.6 2088 L1021 2088 L1026 2093 L1021 2097 Z" fill="#e0a80c"/><path d="M1010.5 2132 L1010.5 2114 Q1010.5 2110 1014.5 2110 L1041 2110 Q1045 2110 1045 2114 L1045 2132 L1037 2132 L1037 2118 L1018.5 2118 L1018.5 2132 Z" fill="#3a96dd"/><rect x="977.8" y="2155" width="78" height="5" fill="#76b9ed"/><rect x="1055.8" y="2155" width="23.2" height="5" fill="#5f95c6"/><ellipse cx="1152" cy="2110" rx="25" ry="15" fill="#8a8a8a" stroke="#b03030" stroke-width="1" transform="rotate(-20 1152 2110)"/><ellipse cx="1153" cy="2102" rx="26" ry="17" fill="#f2f2f2" stroke="#d03030" stroke-width="1.4" transform="rotate(-20 1153 2102)"/><path d="M1148 2089 L1162 2117 M1133 2101 L1160 2117" stroke="#999" stroke-width="2.4"/><ellipse cx="1161" cy="2128" rx="4" ry="9" fill="none" stroke="#1a88d8" stroke-width="3" transform="rotate(15 1161 2128)"/><ellipse cx="1173" cy="2120" rx="5" ry="8" fill="none" stroke="#1a88d8" stroke-width="3" transform="rotate(-50 1173 2120)"/><path d="M1250 2118 Q1246 2100 1265 2092 Q1290 2082 1298 2100 Q1305 2118 1280 2127 Q1265 2132 1258 2125 Q1262 2115 1250 2118 Z" fill="#bcdff5"/><circle cx="1268" cy="2109" r="3" fill="#111"/><circle cx="1256" cy="2111" r="4" fill="#e53935"/><circle cx="1264" cy="2098" r="4" fill="#43a047"/><circle cx="1276" cy="2094" r="4" fill="#fbc02d"/><path d="M1272 2135 L1294 2093" stroke="#e38b1c" stroke-width="4"/><path d="M1292 2094 L1298 2082 L1304 2088 Z" fill="#d9b07a"/><defs><radialGradient id="ffG" cx="45%" cy="45%" r="60%"><stop offset="0" stop-color="#a03bd8"/><stop offset="1" stop-color="#5b3ec8"/></radialGradient><linearGradient id="ffO" x1="0" y1="0" x2="0" y2="1"><stop offset="0" stop-color="#ffbd2e"/><stop offset="0.5" stop-color="#ff7139"/><stop offset="1" stop-color="#e31587"/></linearGradient></defs><path d="M1410 2082 Q1428 2090 1427 2112 Q1426 2136 1400 2136 Q1376 2136 1374 2112 Q1374 2098 1382 2090 Q1381 2100 1387 2104 Q1392 2092 1404 2094 Q1412 2088 1410 2082 Z" fill="url(#ffO)"/><circle cx="1401" cy="2112" r="14" fill="url(#ffG)"/><path d="M1380 2103 Q1392 2098 1404 2102 Q1396 2106 1392 2112 Q1384 2110 1380 2103 Z" fill="#ff9a3c"/><path d="M1376 2118 Q1384 2132 1402 2133 Q1418 2133 1424 2118 Q1416 2128 1402 2128 Q1386 2128 1376 2118 Z" fill="#ff6a3a"/><rect x="1349.8" y="2155" width="100.8" height="5" fill="#76b9ed"/><circle cx="1524" cy="2110" r="30.3" fill="#2e9e4f"/><path d="M1524 2110 L1498 2095 A30.3 30.3 0 0 1 1550.2 2094.8 Z" fill="#db4437"/><path d="M1524 2110 L1550.2 2094.8 A30.3 30.3 0 0 1 1524 2140.3 Z" fill="#fbc02d"/><circle cx="1524" cy="2110" r="15.5" fill="#fff"/><circle cx="1524" cy="2110" r="12.3" fill="#2b7de9"/><rect x="1646" y="2088" width="28.3" height="45" fill="#fff"/><rect x="1649" y="2092" width="22" height="37" fill="#1e7145"/><line x1="1649" y1="2099.0" x2="1671" y2="2099.0" stroke="#fff" stroke-width="1.6"/><line x1="1649" y1="2105.5" x2="1671" y2="2105.5" stroke="#fff" stroke-width="1.6"/><line x1="1649" y1="2112.0" x2="1671" y2="2112.0" stroke="#fff" stroke-width="1.6"/><line x1="1649" y1="2118.5" x2="1671" y2="2118.5" stroke="#fff" stroke-width="1.6"/><line x1="1649" y1="2125.0" x2="1671" y2="2125.0" stroke="#fff" stroke-width="1.6"/><line x1="1660" y1="2092" x2="1660" y2="2129" stroke="#fff" stroke-width="1.6"/><path d="M1620.7 2089 L1652 2083.3 L1652 2136.4 L1620.7 2131 Z" fill="#1e7145"/><text x="1636" y="2120" font-size="26" font-weight="bold" fill="#fff" text-anchor="middle">X</text><rect x="1588" y="2155" width="110.3" height="5" fill="#76b9ed"/><rect x="1698.3" y="2155" width="10.7" height="5" fill="#5f95c6"/><defs><linearGradient id="npG" x1="0" y1="0" x2="0" y2="1"><stop offset="0" stop-color="#f4f4f4"/><stop offset="0.35" stop-color="#e2ead8"/><stop offset="0.55" stop-color="#d8e86a"/><stop offset="1" stop-color="#22a022"/></linearGradient><linearGradient id="ntG" x1="0" y1="0" x2="1" y2="1"><stop offset="0" stop-color="#d8f0fa"/><stop offset="0.6" stop-color="#6cc0dc"/><stop offset="1" stop-color="#2f8fb0"/></linearGradient></defs><path d="M1745.5 2086.3 L1772.3 2086.3 L1782.8 2096 L1788.2 2132.8 L1745.5 2137.1 Z" fill="url(#npG)"/><path d="M1772.3 2086.3 L1773 2095 L1782.8 2096 Z" fill="#d0d0d0"/><ellipse cx="1763" cy="2106" rx="7" ry="5.5" fill="#5cc84a"/><circle cx="1760.5" cy="2102" r="2.6" fill="#fff"/><circle cx="1765.5" cy="2103" r="2.4" fill="#fff"/><path d="M1749 2112 L1768 2111" stroke="#3d5a2a" stroke-width="1.3"/><path d="M1761 2117 Q1768 2122 1778 2120" stroke="#3a6a2a" stroke-width="2.2" fill="none"/><path d="M1783.6 2115.4 L1797 2083.5" stroke="#f0a818" stroke-width="3"/><path d="M1796 2085 L1799.5 2081" stroke="#c03030" stroke-width="3"/><rect x="1722" y="2155" width="100.6" height="5" fill="#76b9ed"/><path d="M1878.7 2128.6 L1909.3 2137.1 L1917.9 2091.3 L1886 2085.9 Z" fill="#f2f6f8"/><path d="M1917.9 2091.3 L1920.2 2092 L1921 2130.9 L1913 2132 Z" fill="#c8a050"/><path d="M1866.6 2121.6 L1886 2085.9 L1916.3 2089.4 L1898.5 2130.9 Z" fill="url(#ntG)"/><line x1="1886" y1="2086.5" x2="1916.3" y2="2090" stroke="#888" stroke-width="2" stroke-dasharray="1.5,1"/><rect x="1846" y="2155" width="71.7" height="5" fill="#76b9ed"/><rect x="1917.7" y="2155" width="22.3" height="5" fill="#5f95c6"/><defs><linearGradient id="sunG" x1="0" y1="0" x2="1" y2="1"><stop offset="0" stop-color="#f8c230"/><stop offset="1" stop-color="#f0620f"/></linearGradient></defs><circle cx="2757" cy="2110" r="25" fill="url(#sunG)"/><path d="M3063.3 2115.6 L3078.8 2099.5 L3094.7 2115.6" fill="none" stroke="#fff" stroke-width="2.2"/><path d="M3140 2094 L3140 2102 M3149.7 2094 L3149.7 2102 M3138 2102 L3151.7 2102 L3151.7 2106 Q3151.7 2111 3144.8 2111 Q3138 2111 3138 2106 Z M3144.8 2111 L3144.8 2122" fill="none" stroke="#fff" stroke-width="2.2"/><path d="M3155 2100 L3176 2100 L3176 2121.4 L3149 2121.4 L3149 2115" fill="none" stroke="#fff" stroke-width="2.4"/><rect x="3152" y="2103.5" width="20.5" height="14.5" fill="#fff"/><rect x="3176" y="2107" width="3" height="7.6" fill="#fff"/><defs><radialGradient id="glG" cx="35%" cy="30%" r="75%"><stop offset="0" stop-color="#f4f4f4"/><stop offset="1" stop-color="#9a9a9a"/></radialGradient></defs><circle cx="3236" cy="2107.8" r="17.5" fill="url(#glG)"/><path d="M3226 2096 Q3232 2093 3236 2098 Q3231 2103 3227 2101 Z M3239 2094 Q3247 2097 3249 2104 Q3243 2104 3240 2100 Z" fill="#fff" opacity="0.8"/><circle cx="3244.8" cy="2116.6" r="11" fill="#d9262f"/><path d="M3240.3 2112.1 L3249.3 2121.1 M3249.3 2112.1 L3240.3 2121.1" stroke="#fff" stroke-width="2.6"/><path d="M3299.5 2102.5 L3307 2102.5 L3312.7 2096.5 L3312.7 2123.5 L3307 2116.5 L3299.5 2116.5 Z" fill="none" stroke="#fff" stroke-width="2"/><path d="M3319.5 2104 Q3323 2109.5 3319.5 2115 M3326 2098 Q3333 2109.5 3326 2122 M3332.5 2092 Q3343 2109.5 3332.5 2128" fill="none" stroke="#fff" stroke-width="2"/><path d="M3386 2127 Q3387 2100 3416 2097.5" fill="none" stroke="#9a9a9a" stroke-width="2"/><path d="M3394 2127 Q3396 2108 3416 2106" fill="none" stroke="#fff" stroke-width="2"/><path d="M3402 2127 Q3403 2115 3416 2114" fill="none" stroke="#fff" stroke-width="2"/><circle cx="3413" cy="2124" r="3" fill="#fff"/><path d="M3481.5 2128 L3499 2094 Q3501 2090 3504.5 2092 Q3507.5 2094 3506 2097.5 L3488.5 2131 L3482 2133 Z" fill="none" stroke="#fff" stroke-width="2"/><path d="M3483 2130.5 Q3470 2132 3470 2124 Q3471 2116 3482 2115 M3500 2110 Q3510 2112 3509 2105 Q3508 2100 3503 2102" fill="none" stroke="#fff" stroke-width="2"/><path d="M3736 2090 L3780 2090 L3780 2118 L3752 2118 L3745 2126 L3745 2118 L3736 2118 Z" fill="#fff"/><line x1="3743" y1="2097.0" x2="3773" y2="2097.0" stroke="#1c1c1c" stroke-width="2"/><line x1="3743" y1="2103.0" x2="3773" y2="2103.0" stroke="#1c1c1c" stroke-width="2"/><line x1="3743" y1="2109.0" x2="3773" y2="2109.0" stroke="#1c1c1c" stroke-width="2"/><circle cx="3775" cy="2127" r="17" fill="#2f2f2f" stroke="#888" stroke-width="1.6"/><text x="3775" y="2137.5" font-size="29" fill="#fff" text-anchor="middle">2</text><line x1="3827" y1="2062" x2="3827" y2="2160" stroke="#777" stroke-width="1.4"/></svg>
<div class="t" style="top:2092.4px;font-size:36.50px;line-height:40.77px;color:#222;left:233.0px;">Type here to search</div>
<div class="t" style="top:2094.2px;font-size:34.00px;line-height:37.98px;color:#fff;left:2806.0px;">97°F</div>
<div class="t" style="top:2094.2px;font-size:34.00px;line-height:37.98px;color:#fff;left:2896.0px;">Sunny</div>
<div class="t" style="top:2073.2px;font-size:28.50px;line-height:31.83px;color:#fff;left:2622.5px;width:2000px;text-align:center;">12:28 PM</div>
<div class="t" style="top:2121.2px;font-size:28.50px;line-height:31.83px;color:#fff;left:2622.5px;width:2000px;text-align:center;">8/3/2023</div>
</body></html>
